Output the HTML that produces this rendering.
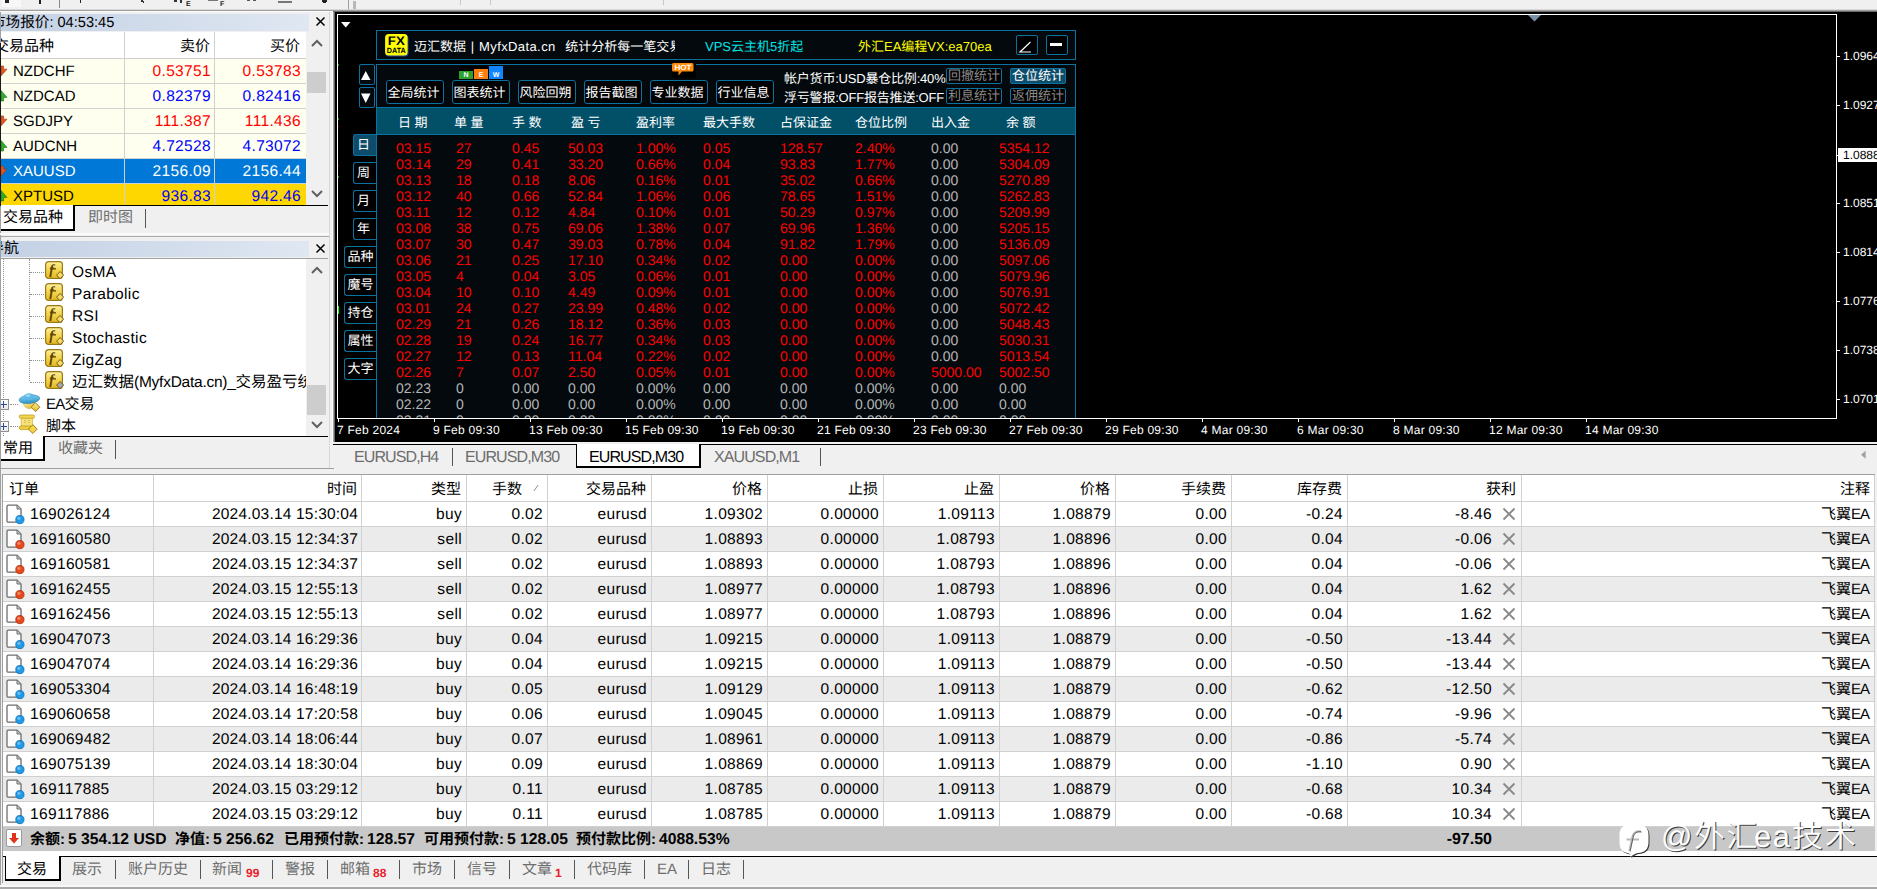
<!DOCTYPE html>
<html lang="zh-CN"><head><meta charset="utf-8"><title>MT4</title>
<style>
html,body{margin:0;padding:0}
body{width:1877px;height:889px;overflow:hidden;background:#f0f0f0;position:relative;font-family:"Liberation Sans","Noto Sans CJK SC",sans-serif;font-size:15px;color:#000;text-rendering:geometricPrecision}
.n{font-size:15.5px;letter-spacing:.35px}
div,span{box-sizing:border-box}
.a{position:absolute;white-space:nowrap}
.r{text-align:right}
.c{text-align:center}
</style></head><body>

<div class="a" style="left:0;top:0;width:1877px;height:10px;background:#f0f0f0"></div>
<div class="a" style="left:0;top:9px;width:1877px;height:1px;background:#d8d8d8"></div>
<div class="a" style="left:0;top:10px;width:1877px;height:1px;background:#a0a0a0"></div>
<div class="a" style="left:0;top:11px;width:333px;height:1px;background:#fafafa"></div>
<div class="a" style="left:333px;top:11px;width:1544px;height:1px;background:#696969"></div>
<div class="a" style="left:2px;top:0;width:19px;height:7px;background:#f8f8f8"></div>
<div class="a" style="left:5px;top:0px;width:4px;height:3px;background:#222"></div>
<div class="a" style="left:39px;top:0px;width:2px;height:4px;background:#222"></div>
<div class="a" style="left:59px;top:0px;width:1px;height:8px;background:#8a8a8a"></div>
<div class="a" style="left:80px;top:0px;width:1px;height:3px;background:#222"></div>
<div class="a" style="left:141px;top:0px;width:2px;height:2px;background:#333"></div>
<div class="a" style="left:143px;top:1px;width:1px;height:2px;background:#333"></div>
<div class="a" style="left:174px;top:0px;width:3px;height:2px;background:#333"></div>
<div class="a" style="left:180px;top:0px;width:2px;height:3px;background:#333"></div>
<div class="a" style="left:208px;top:0px;width:10px;height:1px;background:#777"></div>
<div class="a" style="left:247px;top:0px;width:3px;height:1px;background:#555"></div>
<div class="a" style="left:253px;top:0px;width:3px;height:1px;background:#555"></div>
<div class="a" style="left:278px;top:1px;width:14px;height:2px;background:#777"></div>
<div class="a" style="left:322px;top:0px;width:5px;height:2px;background:#222"></div>
<div class="a" style="left:323px;top:2px;width:3px;height:1px;background:#222"></div>
<div class="a" style="left:348px;top:0px;width:1px;height:9px;background:#a0a0a0"></div>
<div class="a" style="left:353px;top:1px;width:3px;height:8px;background:#b8b8b8"></div>
<div class="a" style="left:460px;top:0px;width:1px;height:5px;background:#c8c8c8"></div>
<div class="a" style="left:490px;top:0px;width:1px;height:5px;background:#c8c8c8"></div>
<div class="a" style="left:663px;top:0px;width:1px;height:5px;background:#c8c8c8"></div>
<div class="a" style="left:186px;top:1px;font-size:7px;line-height:8px;font-weight:bold;color:#222">E</div>
<div class="a" style="left:220px;top:1px;font-size:7px;line-height:8px;font-weight:bold;color:#222">F</div>
<div class="a" style="left:0;top:12px;width:330px;height:224px;background:#f0f0f0"></div>
<div class="a" style="left:0;top:14px;width:309px;height:17px;background:linear-gradient(90deg,#c3d1e4,#dfe7f2)"></div>
<div class="a" style="left:-9px;top:13px;font-size:14.6px;line-height:20px">市场报价: 04:53:45</div>
<svg class="a" style="left:315px;top:16px" width="11" height="11" viewBox="0 0 11 11"><path d="M1.5 1.5 L9.5 9.5 M9.5 1.5 L1.5 9.5" stroke="#000" stroke-width="1.5" fill="none"/></svg>
<div class="a" style="left:0;top:32px;width:306px;height:173px;background:#fff"></div>
<div class="a" style="left:306px;top:32px;width:22px;height:173px;background:#f0f0f0"></div>
<div class="a" style="left:-6px;top:37px;font-size:15px;line-height:20px">交易品种</div>
<div class="a r" style="left:126px;top:37px;width:84px;font-size:15px;line-height:20px">卖价</div>
<div class="a r" style="left:216px;top:37px;width:84px;font-size:15px;line-height:20px">买价</div>
<div class="a" style="left:0;top:59px;width:306px;height:24px;background:#fffff0;overflow:hidden"><span class="a" style="left:13px;top:3px;line-height:20px;color:#000">NZDCHF</span><span class="a r n" style="left:126px;top:3px;width:85px;line-height:20px;color:#f00">0.53751</span><span class="a r n" style="left:216px;top:3px;width:85px;line-height:20px;color:#f00">0.53783</span></div>
<div class="a" style="left:0;top:83px;width:306px;height:1px;background:#d0d0d0"></div>
<svg class="a" style="left:1px;top:65px" width="7" height="12" viewBox="0 0 7 12"><path d="M0 1 H2.6 V4.2 H6 L0.4 10.6 H0Z" fill="#e8561c" stroke="#9a3a10" stroke-width="0.6"/></svg>
<div class="a" style="left:0;top:84px;width:306px;height:24px;background:#fffff0;overflow:hidden"><span class="a" style="left:13px;top:3px;line-height:20px;color:#000">NZDCAD</span><span class="a r n" style="left:126px;top:3px;width:85px;line-height:20px;color:#00f">0.82379</span><span class="a r n" style="left:216px;top:3px;width:85px;line-height:20px;color:#00f">0.82416</span></div>
<div class="a" style="left:0;top:108px;width:306px;height:1px;background:#d0d0d0"></div>
<svg class="a" style="left:1px;top:90px" width="7" height="12" viewBox="0 0 7 12"><path d="M0 11 H2.6 V7.4 H6 L0.4 0.8 H0Z" fill="#2cb02c" stroke="#167016" stroke-width="0.6"/></svg>
<div class="a" style="left:0;top:109px;width:306px;height:24px;background:#fffff0;overflow:hidden"><span class="a" style="left:13px;top:3px;line-height:20px;color:#000">SGDJPY</span><span class="a r n" style="left:126px;top:3px;width:85px;line-height:20px;color:#f00">111.387</span><span class="a r n" style="left:216px;top:3px;width:85px;line-height:20px;color:#f00">111.436</span></div>
<div class="a" style="left:0;top:133px;width:306px;height:1px;background:#d0d0d0"></div>
<svg class="a" style="left:1px;top:115px" width="7" height="12" viewBox="0 0 7 12"><path d="M0 1 H2.6 V4.2 H6 L0.4 10.6 H0Z" fill="#e8561c" stroke="#9a3a10" stroke-width="0.6"/></svg>
<div class="a" style="left:0;top:134px;width:306px;height:24px;background:#fffff0;overflow:hidden"><span class="a" style="left:13px;top:3px;line-height:20px;color:#000">AUDCNH</span><span class="a r n" style="left:126px;top:3px;width:85px;line-height:20px;color:#00f">4.72528</span><span class="a r n" style="left:216px;top:3px;width:85px;line-height:20px;color:#00f">4.73072</span></div>
<div class="a" style="left:0;top:158px;width:306px;height:1px;background:#d0d0d0"></div>
<svg class="a" style="left:1px;top:140px" width="7" height="12" viewBox="0 0 7 12"><path d="M0 11 H2.6 V7.4 H6 L0.4 0.8 H0Z" fill="#2cb02c" stroke="#167016" stroke-width="0.6"/></svg>
<div class="a" style="left:0;top:159px;width:306px;height:24px;background:#0078d7;overflow:hidden"><span class="a" style="left:13px;top:3px;line-height:20px;color:#fff">XAUUSD</span><span class="a r n" style="left:126px;top:3px;width:85px;line-height:20px;color:#fff">2156.09</span><span class="a r n" style="left:216px;top:3px;width:85px;line-height:20px;color:#fff">2156.44</span></div>
<div class="a" style="left:0;top:183px;width:306px;height:1px;background:#d0d0d0"></div>
<svg class="a" style="left:1px;top:165px" width="7" height="12" viewBox="0 0 7 12"><path d="M0 1 H2.6 V4.2 H6 L0.4 10.6 H0Z" fill="#e8561c" stroke="#9a3a10" stroke-width="0.6"/></svg>
<div class="a" style="left:0;top:184px;width:306px;height:21px;background:#ffd700;overflow:hidden"><span class="a" style="left:13px;top:3px;line-height:20px;color:#000">XPTUSD</span><span class="a r n" style="left:126px;top:3px;width:85px;line-height:20px;color:#00f">936.83</span><span class="a r n" style="left:216px;top:3px;width:85px;line-height:20px;color:#00f">942.46</span></div>
<svg class="a" style="left:1px;top:190px" width="7" height="12" viewBox="0 0 7 12"><path d="M0 11 H2.6 V7.4 H6 L0.4 0.8 H0Z" fill="#2cb02c" stroke="#167016" stroke-width="0.6"/></svg>
<div class="a" style="left:124px;top:32px;width:1px;height:173px;background:#d0d0d0"></div>
<div class="a" style="left:214px;top:32px;width:1px;height:173px;background:#d0d0d0"></div>
<div class="a" style="left:0;top:58px;width:306px;height:1px;background:#d0d0d0"></div>
<div class="a" style="left:307px;top:72px;width:19px;height:21px;background:#cdcdcd"></div>
<svg class="a" style="left:310px;top:38px" width="14" height="10" viewBox="0 0 14 10"><path d="M2 8 L7 3 L12 8" fill="none" stroke="#606060" stroke-width="2"/></svg>
<svg class="a" style="left:310px;top:189px" width="14" height="10" viewBox="0 0 14 10"><path d="M2 2 L7 7 L12 2" fill="none" stroke="#606060" stroke-width="2"/></svg>
<div class="a" style="left:0;top:205px;width:328px;height:1px;background:#000"></div>
<div class="a" style="left:0;top:205px;width:75px;height:26px;background:#fff;border-right:2px solid #000;border-bottom:2px solid #000"></div>
<div class="a" style="left:3px;top:208px;font-size:15px;line-height:20px">交易品种</div>
<div class="a" style="left:88px;top:208px;font-size:15px;line-height:20px;color:#6d6d6d">即时图</div>
<div class="a" style="left:145px;top:209px;width:1px;height:19px;background:#555"></div>
<div class="a" style="left:0;top:12px;width:1px;height:224px;background:#a0a0a0"></div>
<div class="a" style="left:0;top:43px;width:1px;height:163px;background:#1a1a1a"></div>
<div class="a" style="left:0;top:236px;width:330px;height:232px;background:#f0f0f0"></div>
<div class="a" style="left:0;top:241px;width:309px;height:16px;background:linear-gradient(90deg,#c3d1e4,#dfe7f2)"></div>
<div class="a" style="left:-11px;top:239px;font-size:15px;line-height:20px">导航</div>
<svg class="a" style="left:315px;top:243px" width="11" height="11" viewBox="0 0 11 11"><path d="M1.5 1.5 L9.5 9.5 M9.5 1.5 L1.5 9.5" stroke="#000" stroke-width="1.5" fill="none"/></svg>
<div class="a" style="left:0;top:259px;width:306px;height:177px;background:#fff"></div>
<div class="a" style="left:0;top:258px;width:328px;height:1px;background:#a0a0a0"></div>
<div class="a" style="left:0;top:233px;width:329px;height:2px;background:#fafafa"></div>
<div class="a" style="left:0;top:236px;width:333px;height:1px;background:#a8a8a8"></div>
<div class="a n" style="left:72px;top:263px;line-height:20px;width:234px;overflow:hidden">OsMA</div>
<svg class="a" style="left:45px;top:261px" width="20" height="20" viewBox="0 0 20 20"><defs><linearGradient id="fg0" x1="0" y1="0" x2="0" y2="1"><stop offset="0" stop-color="#fdf0a0"/><stop offset="0.5" stop-color="#f3d44e"/><stop offset="1" stop-color="#e6b820"/></linearGradient></defs><rect x="0.6" y="0.6" width="16.8" height="16.8" rx="3" fill="url(#fg0)" stroke="#9a7a14" stroke-width="1.2"/><text x="4.2" y="13.2" font-family="Liberation Serif,serif" font-style="italic" font-weight="bold" font-size="14" fill="#5c4300">f</text><rect x="5" y="7.2" width="6" height="1.3" fill="#5c4300"/><rect x="12.6" y="11.6" width="5" height="5" transform="rotate(45 15.1 14.1)" fill="#f7dc6a" stroke="#6a5210" stroke-width="0.9"/></svg>
<div class="a" style="left:30px;top:272px;width:14px;height:0;border-top:1px dotted #909090"></div>
<div class="a n" style="left:72px;top:285px;line-height:20px;width:234px;overflow:hidden">Parabolic</div>
<svg class="a" style="left:45px;top:283px" width="20" height="20" viewBox="0 0 20 20"><defs><linearGradient id="fg1" x1="0" y1="0" x2="0" y2="1"><stop offset="0" stop-color="#fdf0a0"/><stop offset="0.5" stop-color="#f3d44e"/><stop offset="1" stop-color="#e6b820"/></linearGradient></defs><rect x="0.6" y="0.6" width="16.8" height="16.8" rx="3" fill="url(#fg1)" stroke="#9a7a14" stroke-width="1.2"/><text x="4.2" y="13.2" font-family="Liberation Serif,serif" font-style="italic" font-weight="bold" font-size="14" fill="#5c4300">f</text><rect x="5" y="7.2" width="6" height="1.3" fill="#5c4300"/><rect x="12.6" y="11.6" width="5" height="5" transform="rotate(45 15.1 14.1)" fill="#f7dc6a" stroke="#6a5210" stroke-width="0.9"/></svg>
<div class="a" style="left:30px;top:294px;width:14px;height:0;border-top:1px dotted #909090"></div>
<div class="a n" style="left:72px;top:307px;line-height:20px;width:234px;overflow:hidden">RSI</div>
<svg class="a" style="left:45px;top:305px" width="20" height="20" viewBox="0 0 20 20"><defs><linearGradient id="fg2" x1="0" y1="0" x2="0" y2="1"><stop offset="0" stop-color="#fdf0a0"/><stop offset="0.5" stop-color="#f3d44e"/><stop offset="1" stop-color="#e6b820"/></linearGradient></defs><rect x="0.6" y="0.6" width="16.8" height="16.8" rx="3" fill="url(#fg2)" stroke="#9a7a14" stroke-width="1.2"/><text x="4.2" y="13.2" font-family="Liberation Serif,serif" font-style="italic" font-weight="bold" font-size="14" fill="#5c4300">f</text><rect x="5" y="7.2" width="6" height="1.3" fill="#5c4300"/><rect x="12.6" y="11.6" width="5" height="5" transform="rotate(45 15.1 14.1)" fill="#f7dc6a" stroke="#6a5210" stroke-width="0.9"/></svg>
<div class="a" style="left:30px;top:316px;width:14px;height:0;border-top:1px dotted #909090"></div>
<div class="a n" style="left:72px;top:329px;line-height:20px;width:234px;overflow:hidden">Stochastic</div>
<svg class="a" style="left:45px;top:327px" width="20" height="20" viewBox="0 0 20 20"><defs><linearGradient id="fg3" x1="0" y1="0" x2="0" y2="1"><stop offset="0" stop-color="#fdf0a0"/><stop offset="0.5" stop-color="#f3d44e"/><stop offset="1" stop-color="#e6b820"/></linearGradient></defs><rect x="0.6" y="0.6" width="16.8" height="16.8" rx="3" fill="url(#fg3)" stroke="#9a7a14" stroke-width="1.2"/><text x="4.2" y="13.2" font-family="Liberation Serif,serif" font-style="italic" font-weight="bold" font-size="14" fill="#5c4300">f</text><rect x="5" y="7.2" width="6" height="1.3" fill="#5c4300"/><rect x="12.6" y="11.6" width="5" height="5" transform="rotate(45 15.1 14.1)" fill="#f7dc6a" stroke="#6a5210" stroke-width="0.9"/></svg>
<div class="a" style="left:30px;top:338px;width:14px;height:0;border-top:1px dotted #909090"></div>
<div class="a n" style="left:72px;top:351px;line-height:20px;width:234px;overflow:hidden">ZigZag</div>
<svg class="a" style="left:45px;top:349px" width="20" height="20" viewBox="0 0 20 20"><defs><linearGradient id="fg4" x1="0" y1="0" x2="0" y2="1"><stop offset="0" stop-color="#fdf0a0"/><stop offset="0.5" stop-color="#f3d44e"/><stop offset="1" stop-color="#e6b820"/></linearGradient></defs><rect x="0.6" y="0.6" width="16.8" height="16.8" rx="3" fill="url(#fg4)" stroke="#9a7a14" stroke-width="1.2"/><text x="4.2" y="13.2" font-family="Liberation Serif,serif" font-style="italic" font-weight="bold" font-size="14" fill="#5c4300">f</text><rect x="5" y="7.2" width="6" height="1.3" fill="#5c4300"/><rect x="12.6" y="11.6" width="5" height="5" transform="rotate(45 15.1 14.1)" fill="#f7dc6a" stroke="#6a5210" stroke-width="0.9"/></svg>
<div class="a" style="left:30px;top:360px;width:14px;height:0;border-top:1px dotted #909090"></div>
<div class="a n" style="left:72px;top:373px;line-height:20px;width:234px;overflow:hidden"><span style="letter-spacing:0">迈汇数据</span><span style="letter-spacing:-0.25px">(MyfxData.cn)_</span><span style="letter-spacing:0">交易盈亏统计</span></div>
<svg class="a" style="left:45px;top:371px" width="20" height="20" viewBox="0 0 20 20"><defs><linearGradient id="fg5" x1="0" y1="0" x2="0" y2="1"><stop offset="0" stop-color="#fdf0a0"/><stop offset="0.5" stop-color="#f3d44e"/><stop offset="1" stop-color="#e6b820"/></linearGradient></defs><rect x="0.6" y="0.6" width="16.8" height="16.8" rx="3" fill="url(#fg5)" stroke="#9a7a14" stroke-width="1.2"/><text x="4.2" y="13.2" font-family="Liberation Serif,serif" font-style="italic" font-weight="bold" font-size="14" fill="#5c4300">f</text><rect x="5" y="7.2" width="6" height="1.3" fill="#5c4300"/><rect x="12.6" y="11.6" width="5" height="5" transform="rotate(45 15.1 14.1)" fill="#a8a8a8" stroke="#6a5210" stroke-width="0.9"/></svg>
<div class="a" style="left:30px;top:382px;width:14px;height:0;border-top:1px dotted #909090"></div>
<div class="a" style="left:29px;top:259px;width:0;height:122px;border-left:1px dotted #909090"></div>
<div class="a" style="left:3px;top:259px;width:0;height:177px;border-left:1px dotted #909090"></div>
<div class="a" style="left:46px;top:395px;line-height:20px"><span style="letter-spacing:-0.8px">EA</span>交易</div>
<div class="a" style="left:-1px;top:399px;width:10px;height:11px;border:1px solid #909090;background:linear-gradient(#fff,#e8e8e8)"></div>
<div class="a" style="left:1px;top:404px;width:6px;height:1px;background:#2a4a9a"></div>
<div class="a" style="left:3px;top:401px;width:1px;height:7px;background:#2a4a9a"></div>
<div class="a" style="left:10px;top:404px;width:8px;height:0;border-top:1px dotted #909090"></div>
<div class="a" style="left:46px;top:417px;line-height:20px">脚本</div>
<div class="a" style="left:-1px;top:421px;width:10px;height:11px;border:1px solid #909090;background:linear-gradient(#fff,#e8e8e8)"></div>
<div class="a" style="left:1px;top:426px;width:6px;height:1px;background:#2a4a9a"></div>
<div class="a" style="left:3px;top:423px;width:1px;height:7px;background:#2a4a9a"></div>
<div class="a" style="left:10px;top:426px;width:8px;height:0;border-top:1px dotted #909090"></div>
<svg class="a" style="left:18px;top:392px" width="24" height="22" viewBox="0 0 24 22"><defs><linearGradient id="hb" x1="0" y1="0" x2="0" y2="1"><stop offset="0" stop-color="#7fd0f2"/><stop offset="1" stop-color="#2f93c8"/></linearGradient><linearGradient id="yd" x1="0" y1="0" x2="1" y2="1"><stop offset="0" stop-color="#fdf0a0"/><stop offset="1" stop-color="#e0b020"/></linearGradient></defs><path d="M5.5 10.5 H16.8 C16.8 14 14.5 16.5 11.2 16.5 C8 16.5 5.5 14 5.5 10.5Z" fill="url(#yd)" stroke="#c09a20" stroke-width="0.5"/><ellipse cx="11.4" cy="7.2" rx="10.4" ry="4.2" transform="rotate(-6 11.4 7.2)" fill="url(#hb)" stroke="#2a7fb0" stroke-width="0.6"/><ellipse cx="11.2" cy="4.6" rx="5.2" ry="3.4" fill="#5db8e6"/><ellipse cx="10" cy="3.6" rx="2.6" ry="1.4" fill="#a8e0f8" opacity="0.8"/><rect x="14.4" y="12.1" width="6.2" height="6.2" transform="rotate(45 17.5 15.2)" fill="url(#yd)" stroke="#9a7a14" stroke-width="0.9"/></svg>
<svg class="a" style="left:18px;top:414px" width="24" height="22" viewBox="0 0 24 22"><path d="M3.2 2.2 H14.6 V13 H3.2Z" fill="#f6e27a" stroke="#c8a428" stroke-width="0.6"/><rect x="1.2" y="1" width="15.4" height="3.2" rx="1.6" fill="#f3d650" stroke="#b8941a" stroke-width="0.7"/><rect x="1.2" y="12" width="13" height="3.6" rx="1.8" fill="#f0cc40" stroke="#b8941a" stroke-width="0.7"/><path d="M6 6.5 h2 M10 6.5 h2 M6 8.5 h2 M10 8.5 h2" stroke="#d4b440" stroke-width="0.8"/><rect x="11.7" y="12" width="6.2" height="6.2" transform="rotate(45 14.8 15.1)" fill="#f5d548" stroke="#9a7a14" stroke-width="0.9"/></svg>
<div class="a" style="left:306px;top:259px;width:22px;height:177px;background:#f0f0f0"></div>
<div class="a" style="left:307px;top:385px;width:19px;height:30px;background:#cdcdcd"></div>
<svg class="a" style="left:310px;top:265px" width="14" height="10" viewBox="0 0 14 10"><path d="M2 8 L7 3 L12 8" fill="none" stroke="#606060" stroke-width="2"/></svg>
<svg class="a" style="left:310px;top:420px" width="14" height="10" viewBox="0 0 14 10"><path d="M2 2 L7 7 L12 2" fill="none" stroke="#606060" stroke-width="2"/></svg>
<div class="a" style="left:0;top:436px;width:328px;height:1px;background:#000"></div>
<div class="a" style="left:0;top:436px;width:45px;height:25px;background:#fff;border-right:2px solid #000;border-bottom:2px solid #000"></div>
<div class="a" style="left:3px;top:439px;font-size:15px;line-height:20px">常用</div>
<div class="a" style="left:58px;top:439px;font-size:15px;line-height:20px;color:#6d6d6d">收藏夹</div>
<div class="a" style="left:115px;top:440px;width:1px;height:19px;background:#555"></div>
<div class="a" style="left:0;top:236px;width:1px;height:232px;background:#a0a0a0"></div>
<div class="a" style="left:329px;top:12px;width:1px;height:456px;background:#d8d8d8"></div><div class="a" style="left:335px;top:12px;width:1542px;height:430px;background:#000"></div>
<div class="a" style="left:330px;top:12px;width:5px;height:456px;background:#f0f0f0"></div>
<div class="a" style="left:333px;top:12px;width:1px;height:456px;background:#a0a0a0"></div>
<div class="a" style="left:334px;top:12px;width:1px;height:432px;background:#696969"></div>
<div class="a" style="left:332px;top:12px;width:1px;height:456px;background:#fafafa"></div>
<div class="a" style="left:337px;top:14px;width:1500px;height:405px;border:1px solid #fff;border-right:1px solid #fff"></div>
<svg class="a" style="left:340px;top:21px" width="12" height="8" viewBox="0 0 12 8"><path d="M1 1 H10.5 L5.75 6.5Z" fill="#fff"/></svg>
<svg class="a" style="left:1528px;top:15px" width="13" height="7" viewBox="0 0 13 7"><path d="M0 0 H13 L6.5 6.5Z" fill="#7c8fa8"/></svg>
<div class="a" style="left:338px;top:64px;width:1px;height:2px;background:#0a0"></div>
<div class="a" style="left:338px;top:118px;width:1px;height:2px;background:#0a0"></div>
<div class="a" style="left:338px;top:126px;width:1px;height:1px;background:#a00"></div>
<div class="a" style="left:338px;top:165px;width:1px;height:1px;background:#a00"></div>
<div class="a" style="left:338px;top:176px;width:1px;height:2px;background:#0a0"></div>
<div class="a" style="left:338px;top:306px;width:1px;height:8px;background:#0f0"></div>
<div class="a" style="left:376px;top:134px;width:700px;height:284px;background:#03090d;border-left:1px solid #0972a0;border-right:1px solid #0972a0"></div>
<div class="a" style="left:376px;top:30px;width:700px;height:30px;background:#03090d;border:1px solid #0972a0"></div>
<svg class="a" style="left:384px;top:33px" width="26" height="25" viewBox="-0.6 -0.5 26 25"><rect x="1" y="1.5" width="23" height="21.5" rx="3.5" fill="#1c3fb0"/><rect x="0.5" y="0.5" width="22.5" height="21.5" rx="3.5" fill="#ffff00"/><text x="11.7" y="11.2" text-anchor="middle" font-family="Liberation Sans,sans-serif" font-weight="bold" font-size="12.5" textLength="17" lengthAdjust="spacingAndGlyphs" fill="#000">FX</text><text x="11.7" y="19.3" text-anchor="middle" font-family="Liberation Sans,sans-serif" font-weight="bold" font-size="7.6" textLength="19" lengthAdjust="spacingAndGlyphs" fill="#000">DATA</text></svg>
<div class="a" style="left:414px;top:38px;font-size:13px;line-height:18px;color:#fff;width:261px;overflow:hidden;word-spacing:1.2px">迈汇数据 | <span style="letter-spacing:0.4px">MyfxData.cn</span>&nbsp; 统计分析每一笔交易</div>
<div class="a" style="left:705px;top:38px;font-size:13px;line-height:18px;color:#00e5e5">VPS云主机5折起</div>
<div class="a" style="left:858px;top:38px;font-size:13px;line-height:18px;color:#ffff00">外汇EA编程VX:ea70ea</div>
<div class="a" style="left:1016px;top:35px;width:22px;height:20px;border:1px solid #0972a0;border-radius:2px;background:#000"></div>
<div class="a" style="left:1046px;top:35px;width:22px;height:20px;border:1px solid #0972a0;border-radius:2px;background:#000"></div>
<svg class="a" style="left:1016px;top:35px" width="22" height="20" viewBox="0 0 22 20"><path d="M14.5 7 L4 17 H15" fill="none" stroke="#fff" stroke-width="1.2"/></svg>
<div class="a" style="left:1050px;top:43px;width:12px;height:3px;background:#fff"></div>
<div class="a" style="left:376px;top:64px;width:700px;height:44px;background:#03090d;border:1px solid #0972a0;border-bottom:none"></div>
<div class="a" style="left:359px;top:64px;width:16px;height:21px;border:1px solid #0972a0;border-radius:2px;background:#03090d"></div>
<svg class="a" style="left:359px;top:64px" width="16" height="21" viewBox="0 0 16 21"><path d="M2 16 H11.5 L6.75 7Z" fill="#fff"/></svg>
<div class="a" style="left:359px;top:87px;width:16px;height:21px;border:1px solid #0972a0;border-radius:2px;background:#03090d"></div>
<svg class="a" style="left:359px;top:87px" width="16" height="21" viewBox="0 0 16 21"><path d="M2 6.5 H11.5 L6.75 16Z" fill="#fff"/></svg>
<div class="a c" style="left:386px;top:80px;width:58px;height:24px;border:1px solid #0972a0;border-radius:3px;background:#000;color:#fff;font-size:13px;line-height:24px;padding-right:3px">全局统计</div>
<div class="a c" style="left:452px;top:80px;width:58px;height:24px;border:1px solid #0972a0;border-radius:3px;background:#000;color:#fff;font-size:13px;line-height:24px;padding-right:3px">图表统计</div>
<div class="a c" style="left:518px;top:80px;width:58px;height:24px;border:1px solid #0972a0;border-radius:3px;background:#000;color:#fff;font-size:13px;line-height:24px;padding-right:3px">风险回朔</div>
<div class="a c" style="left:584px;top:80px;width:58px;height:24px;border:1px solid #0972a0;border-radius:3px;background:#000;color:#fff;font-size:13px;line-height:24px;padding-right:3px">报告截图</div>
<div class="a c" style="left:650px;top:80px;width:58px;height:24px;border:1px solid #0972a0;border-radius:3px;background:#000;color:#fff;font-size:13px;line-height:24px;padding-right:3px">专业数据</div>
<div class="a c" style="left:716px;top:80px;width:58px;height:24px;border:1px solid #0972a0;border-radius:3px;background:#000;color:#fff;font-size:13px;line-height:24px;padding-right:3px">行业信息</div>
<div class="a" style="left:459px;top:66px;width:44px;height:13px;background:#000"></div>
<div class="a c" style="left:459px;top:71px;width:14px;height:8px;background:#2da12d;color:#fff;font-size:7px;line-height:9px;font-weight:bold">N</div>
<div class="a c" style="left:474px;top:69px;width:14px;height:10px;background:#ff7f0e;color:#fff;font-size:7px;line-height:9px;padding-top:2px;font-weight:bold">E</div>
<div class="a c" style="left:489px;top:66px;width:14px;height:13px;background:#0f86ff;color:#fff;font-size:7px;line-height:9px;padding-top:5px;font-weight:bold">W</div>
<div class="a" style="left:672px;top:63px;width:24px;height:15px;background:#000"></div>
<svg class="a" style="left:671px;top:62px" width="24" height="16" viewBox="0 0 24 16"><path d="M2.5 1 H21 a1.5 1.5 0 0 1 1.5 1.5 V8 a1.5 1.5 0 0 1 -1.5 1.5 H11 L7.5 13.5 L7.5 9.5 H2.5 a1.5 1.5 0 0 1 -1.5 -1.5 V2.5 a1.5 1.5 0 0 1 1.5 -1.5Z" fill="#ff8a0a"/><text x="12" y="8" text-anchor="middle" font-family="Liberation Sans,sans-serif" font-weight="bold" font-size="7.5" fill="#fff" textLength="17" lengthAdjust="spacingAndGlyphs">HOT</text></svg>
<div class="a" style="left:784px;top:70px;font-size:13px;line-height:18px;color:#fff;letter-spacing:-0.2px">帐户货币:USD暴仓比例:40%</div>
<div class="a" style="left:784px;top:89px;font-size:13px;line-height:18px;color:#fff;letter-spacing:-0.2px">浮亏警报:OFF报告推送:OFF</div>
<div class="a c" style="left:946px;top:68px;width:56px;height:16px;border:1px solid #0972a0;border-radius:2px;background:#000;color:#8a8a8a;font-size:13px;line-height:14px">回撤统计</div>
<div class="a c" style="left:1010px;top:68px;width:56px;height:16px;border:1px solid #0972a0;border-radius:2px;background:#0d4d6b;color:#fff;font-size:13px;line-height:14px">仓位统计</div>
<div class="a c" style="left:946px;top:88px;width:56px;height:16px;border:1px solid #0972a0;border-radius:2px;background:#000;color:#8a8a8a;font-size:13px;line-height:14px">利息统计</div>
<div class="a c" style="left:1010px;top:88px;width:56px;height:16px;border:1px solid #0972a0;border-radius:2px;background:#000;color:#8a8a8a;font-size:13px;line-height:14px">返佣统计</div>
<div class="a" style="left:376px;top:107px;width:700px;height:28px;background:#024f68;border:1px solid #0972a0"></div>
<div class="a" style="left:398px;top:114px;font-size:13px;line-height:18px;color:#fff">日 期</div>
<div class="a" style="left:454px;top:114px;font-size:13px;line-height:18px;color:#fff">单 量</div>
<div class="a" style="left:512px;top:114px;font-size:13px;line-height:18px;color:#fff">手 数</div>
<div class="a" style="left:571px;top:114px;font-size:13px;line-height:18px;color:#fff">盈 亏</div>
<div class="a" style="left:636px;top:114px;font-size:13px;line-height:18px;color:#fff">盈利率</div>
<div class="a" style="left:703px;top:114px;font-size:13px;line-height:18px;color:#fff">最大手数</div>
<div class="a" style="left:780px;top:114px;font-size:13px;line-height:18px;color:#fff">占保证金</div>
<div class="a" style="left:855px;top:114px;font-size:13px;line-height:18px;color:#fff">仓位比例</div>
<div class="a" style="left:931px;top:114px;font-size:13px;line-height:18px;color:#fff">出入金</div>
<div class="a" style="left:1006px;top:114px;font-size:13px;line-height:18px;color:#fff">余 额</div>
<div class="a c" style="left:353px;top:134px;width:23px;height:22px;border:1px solid #0972a0;border-right:none;border-radius:3px 0 0 3px;background:#0d4d6b;color:#fff;font-size:13px;line-height:20px;padding-right:3px">日</div>
<div class="a c" style="left:353px;top:162px;width:23px;height:22px;border:1px solid #0972a0;border-right:none;border-radius:3px 0 0 3px;background:#000;color:#fff;font-size:13px;line-height:20px;padding-right:3px">周</div>
<div class="a c" style="left:353px;top:190px;width:23px;height:22px;border:1px solid #0972a0;border-right:none;border-radius:3px 0 0 3px;background:#000;color:#fff;font-size:13px;line-height:20px;padding-right:3px">月</div>
<div class="a c" style="left:353px;top:218px;width:23px;height:22px;border:1px solid #0972a0;border-right:none;border-radius:3px 0 0 3px;background:#000;color:#fff;font-size:13px;line-height:20px;padding-right:3px">年</div>
<div class="a c" style="left:344px;top:246px;width:32px;height:22px;border:1px solid #0972a0;border-right:none;border-radius:3px 0 0 3px;background:#000;color:#fff;font-size:13px;line-height:20px">品种</div>
<div class="a c" style="left:344px;top:274px;width:32px;height:22px;border:1px solid #0972a0;border-right:none;border-radius:3px 0 0 3px;background:#000;color:#fff;font-size:13px;line-height:20px">魔号</div>
<div class="a c" style="left:344px;top:302px;width:32px;height:22px;border:1px solid #0972a0;border-right:none;border-radius:3px 0 0 3px;background:#000;color:#fff;font-size:13px;line-height:20px">持仓</div>
<div class="a c" style="left:344px;top:330px;width:32px;height:22px;border:1px solid #0972a0;border-right:none;border-radius:3px 0 0 3px;background:#000;color:#fff;font-size:13px;line-height:20px">属性</div>
<div class="a c" style="left:344px;top:358px;width:32px;height:22px;border:1px solid #0972a0;border-right:none;border-radius:3px 0 0 3px;background:#000;color:#fff;font-size:13px;line-height:20px">大字</div>
<div class="a" style="left:377px;top:134px;width:698px;height:284px;overflow:hidden;font-size:14px;line-height:16px">
<span class="a" style="left:19px;top:6px;color:#ff0000">03.15</span>
<span class="a" style="left:79px;top:6px;color:#ff0000">27</span>
<span class="a" style="left:135px;top:6px;color:#ff0000">0.45</span>
<span class="a" style="left:191px;top:6px;color:#ff0000">50.03</span>
<span class="a" style="left:259px;top:6px;color:#ff0000">1.00%</span>
<span class="a" style="left:326px;top:6px;color:#ff0000">0.05</span>
<span class="a" style="left:403px;top:6px;color:#ff0000">128.57</span>
<span class="a" style="left:478px;top:6px;color:#ff0000">2.40%</span>
<span class="a" style="left:554px;top:6px;color:#b4b4b4">0.00</span>
<span class="a" style="left:622px;top:6px;color:#ff0000">5354.12</span>
<span class="a" style="left:19px;top:22px;color:#ff0000">03.14</span>
<span class="a" style="left:79px;top:22px;color:#ff0000">29</span>
<span class="a" style="left:135px;top:22px;color:#ff0000">0.41</span>
<span class="a" style="left:191px;top:22px;color:#ff0000">33.20</span>
<span class="a" style="left:259px;top:22px;color:#ff0000">0.66%</span>
<span class="a" style="left:326px;top:22px;color:#ff0000">0.04</span>
<span class="a" style="left:403px;top:22px;color:#ff0000">93.83</span>
<span class="a" style="left:478px;top:22px;color:#ff0000">1.77%</span>
<span class="a" style="left:554px;top:22px;color:#b4b4b4">0.00</span>
<span class="a" style="left:622px;top:22px;color:#ff0000">5304.09</span>
<span class="a" style="left:19px;top:38px;color:#ff0000">03.13</span>
<span class="a" style="left:79px;top:38px;color:#ff0000">18</span>
<span class="a" style="left:135px;top:38px;color:#ff0000">0.18</span>
<span class="a" style="left:191px;top:38px;color:#ff0000">8.06</span>
<span class="a" style="left:259px;top:38px;color:#ff0000">0.16%</span>
<span class="a" style="left:326px;top:38px;color:#ff0000">0.01</span>
<span class="a" style="left:403px;top:38px;color:#ff0000">35.02</span>
<span class="a" style="left:478px;top:38px;color:#ff0000">0.66%</span>
<span class="a" style="left:554px;top:38px;color:#b4b4b4">0.00</span>
<span class="a" style="left:622px;top:38px;color:#ff0000">5270.89</span>
<span class="a" style="left:19px;top:54px;color:#ff0000">03.12</span>
<span class="a" style="left:79px;top:54px;color:#ff0000">40</span>
<span class="a" style="left:135px;top:54px;color:#ff0000">0.66</span>
<span class="a" style="left:191px;top:54px;color:#ff0000">52.84</span>
<span class="a" style="left:259px;top:54px;color:#ff0000">1.06%</span>
<span class="a" style="left:326px;top:54px;color:#ff0000">0.06</span>
<span class="a" style="left:403px;top:54px;color:#ff0000">78.65</span>
<span class="a" style="left:478px;top:54px;color:#ff0000">1.51%</span>
<span class="a" style="left:554px;top:54px;color:#b4b4b4">0.00</span>
<span class="a" style="left:622px;top:54px;color:#ff0000">5262.83</span>
<span class="a" style="left:19px;top:70px;color:#ff0000">03.11</span>
<span class="a" style="left:79px;top:70px;color:#ff0000">12</span>
<span class="a" style="left:135px;top:70px;color:#ff0000">0.12</span>
<span class="a" style="left:191px;top:70px;color:#ff0000">4.84</span>
<span class="a" style="left:259px;top:70px;color:#ff0000">0.10%</span>
<span class="a" style="left:326px;top:70px;color:#ff0000">0.01</span>
<span class="a" style="left:403px;top:70px;color:#ff0000">50.29</span>
<span class="a" style="left:478px;top:70px;color:#ff0000">0.97%</span>
<span class="a" style="left:554px;top:70px;color:#b4b4b4">0.00</span>
<span class="a" style="left:622px;top:70px;color:#ff0000">5209.99</span>
<span class="a" style="left:19px;top:86px;color:#ff0000">03.08</span>
<span class="a" style="left:79px;top:86px;color:#ff0000">38</span>
<span class="a" style="left:135px;top:86px;color:#ff0000">0.75</span>
<span class="a" style="left:191px;top:86px;color:#ff0000">69.06</span>
<span class="a" style="left:259px;top:86px;color:#ff0000">1.38%</span>
<span class="a" style="left:326px;top:86px;color:#ff0000">0.07</span>
<span class="a" style="left:403px;top:86px;color:#ff0000">69.96</span>
<span class="a" style="left:478px;top:86px;color:#ff0000">1.36%</span>
<span class="a" style="left:554px;top:86px;color:#b4b4b4">0.00</span>
<span class="a" style="left:622px;top:86px;color:#ff0000">5205.15</span>
<span class="a" style="left:19px;top:102px;color:#ff0000">03.07</span>
<span class="a" style="left:79px;top:102px;color:#ff0000">30</span>
<span class="a" style="left:135px;top:102px;color:#ff0000">0.47</span>
<span class="a" style="left:191px;top:102px;color:#ff0000">39.03</span>
<span class="a" style="left:259px;top:102px;color:#ff0000">0.78%</span>
<span class="a" style="left:326px;top:102px;color:#ff0000">0.04</span>
<span class="a" style="left:403px;top:102px;color:#ff0000">91.82</span>
<span class="a" style="left:478px;top:102px;color:#ff0000">1.79%</span>
<span class="a" style="left:554px;top:102px;color:#b4b4b4">0.00</span>
<span class="a" style="left:622px;top:102px;color:#ff0000">5136.09</span>
<span class="a" style="left:19px;top:118px;color:#ff0000">03.06</span>
<span class="a" style="left:79px;top:118px;color:#ff0000">21</span>
<span class="a" style="left:135px;top:118px;color:#ff0000">0.25</span>
<span class="a" style="left:191px;top:118px;color:#ff0000">17.10</span>
<span class="a" style="left:259px;top:118px;color:#ff0000">0.34%</span>
<span class="a" style="left:326px;top:118px;color:#ff0000">0.02</span>
<span class="a" style="left:403px;top:118px;color:#ff0000">0.00</span>
<span class="a" style="left:478px;top:118px;color:#ff0000">0.00%</span>
<span class="a" style="left:554px;top:118px;color:#b4b4b4">0.00</span>
<span class="a" style="left:622px;top:118px;color:#ff0000">5097.06</span>
<span class="a" style="left:19px;top:134px;color:#ff0000">03.05</span>
<span class="a" style="left:79px;top:134px;color:#ff0000">4</span>
<span class="a" style="left:135px;top:134px;color:#ff0000">0.04</span>
<span class="a" style="left:191px;top:134px;color:#ff0000">3.05</span>
<span class="a" style="left:259px;top:134px;color:#ff0000">0.06%</span>
<span class="a" style="left:326px;top:134px;color:#ff0000">0.01</span>
<span class="a" style="left:403px;top:134px;color:#ff0000">0.00</span>
<span class="a" style="left:478px;top:134px;color:#ff0000">0.00%</span>
<span class="a" style="left:554px;top:134px;color:#b4b4b4">0.00</span>
<span class="a" style="left:622px;top:134px;color:#ff0000">5079.96</span>
<span class="a" style="left:19px;top:150px;color:#ff0000">03.04</span>
<span class="a" style="left:79px;top:150px;color:#ff0000">10</span>
<span class="a" style="left:135px;top:150px;color:#ff0000">0.10</span>
<span class="a" style="left:191px;top:150px;color:#ff0000">4.49</span>
<span class="a" style="left:259px;top:150px;color:#ff0000">0.09%</span>
<span class="a" style="left:326px;top:150px;color:#ff0000">0.01</span>
<span class="a" style="left:403px;top:150px;color:#ff0000">0.00</span>
<span class="a" style="left:478px;top:150px;color:#ff0000">0.00%</span>
<span class="a" style="left:554px;top:150px;color:#b4b4b4">0.00</span>
<span class="a" style="left:622px;top:150px;color:#ff0000">5076.91</span>
<span class="a" style="left:19px;top:166px;color:#ff0000">03.01</span>
<span class="a" style="left:79px;top:166px;color:#ff0000">24</span>
<span class="a" style="left:135px;top:166px;color:#ff0000">0.27</span>
<span class="a" style="left:191px;top:166px;color:#ff0000">23.99</span>
<span class="a" style="left:259px;top:166px;color:#ff0000">0.48%</span>
<span class="a" style="left:326px;top:166px;color:#ff0000">0.02</span>
<span class="a" style="left:403px;top:166px;color:#ff0000">0.00</span>
<span class="a" style="left:478px;top:166px;color:#ff0000">0.00%</span>
<span class="a" style="left:554px;top:166px;color:#b4b4b4">0.00</span>
<span class="a" style="left:622px;top:166px;color:#ff0000">5072.42</span>
<span class="a" style="left:19px;top:182px;color:#ff0000">02.29</span>
<span class="a" style="left:79px;top:182px;color:#ff0000">21</span>
<span class="a" style="left:135px;top:182px;color:#ff0000">0.26</span>
<span class="a" style="left:191px;top:182px;color:#ff0000">18.12</span>
<span class="a" style="left:259px;top:182px;color:#ff0000">0.36%</span>
<span class="a" style="left:326px;top:182px;color:#ff0000">0.03</span>
<span class="a" style="left:403px;top:182px;color:#ff0000">0.00</span>
<span class="a" style="left:478px;top:182px;color:#ff0000">0.00%</span>
<span class="a" style="left:554px;top:182px;color:#b4b4b4">0.00</span>
<span class="a" style="left:622px;top:182px;color:#ff0000">5048.43</span>
<span class="a" style="left:19px;top:198px;color:#ff0000">02.28</span>
<span class="a" style="left:79px;top:198px;color:#ff0000">19</span>
<span class="a" style="left:135px;top:198px;color:#ff0000">0.24</span>
<span class="a" style="left:191px;top:198px;color:#ff0000">16.77</span>
<span class="a" style="left:259px;top:198px;color:#ff0000">0.34%</span>
<span class="a" style="left:326px;top:198px;color:#ff0000">0.03</span>
<span class="a" style="left:403px;top:198px;color:#ff0000">0.00</span>
<span class="a" style="left:478px;top:198px;color:#ff0000">0.00%</span>
<span class="a" style="left:554px;top:198px;color:#b4b4b4">0.00</span>
<span class="a" style="left:622px;top:198px;color:#ff0000">5030.31</span>
<span class="a" style="left:19px;top:214px;color:#ff0000">02.27</span>
<span class="a" style="left:79px;top:214px;color:#ff0000">12</span>
<span class="a" style="left:135px;top:214px;color:#ff0000">0.13</span>
<span class="a" style="left:191px;top:214px;color:#ff0000">11.04</span>
<span class="a" style="left:259px;top:214px;color:#ff0000">0.22%</span>
<span class="a" style="left:326px;top:214px;color:#ff0000">0.02</span>
<span class="a" style="left:403px;top:214px;color:#ff0000">0.00</span>
<span class="a" style="left:478px;top:214px;color:#ff0000">0.00%</span>
<span class="a" style="left:554px;top:214px;color:#b4b4b4">0.00</span>
<span class="a" style="left:622px;top:214px;color:#ff0000">5013.54</span>
<span class="a" style="left:19px;top:230px;color:#ff0000">02.26</span>
<span class="a" style="left:79px;top:230px;color:#ff0000">7</span>
<span class="a" style="left:135px;top:230px;color:#ff0000">0.07</span>
<span class="a" style="left:191px;top:230px;color:#ff0000">2.50</span>
<span class="a" style="left:259px;top:230px;color:#ff0000">0.05%</span>
<span class="a" style="left:326px;top:230px;color:#ff0000">0.01</span>
<span class="a" style="left:403px;top:230px;color:#ff0000">0.00</span>
<span class="a" style="left:478px;top:230px;color:#ff0000">0.00%</span>
<span class="a" style="left:554px;top:230px;color:#ff0000">5000.00</span>
<span class="a" style="left:622px;top:230px;color:#ff0000">5002.50</span>
<span class="a" style="left:19px;top:246px;color:#b4b4b4">02.23</span>
<span class="a" style="left:79px;top:246px;color:#b4b4b4">0</span>
<span class="a" style="left:135px;top:246px;color:#b4b4b4">0.00</span>
<span class="a" style="left:191px;top:246px;color:#b4b4b4">0.00</span>
<span class="a" style="left:259px;top:246px;color:#b4b4b4">0.00%</span>
<span class="a" style="left:326px;top:246px;color:#b4b4b4">0.00</span>
<span class="a" style="left:403px;top:246px;color:#b4b4b4">0.00</span>
<span class="a" style="left:478px;top:246px;color:#b4b4b4">0.00%</span>
<span class="a" style="left:554px;top:246px;color:#b4b4b4">0.00</span>
<span class="a" style="left:622px;top:246px;color:#b4b4b4">0.00</span>
<span class="a" style="left:19px;top:262px;color:#b4b4b4">02.22</span>
<span class="a" style="left:79px;top:262px;color:#b4b4b4">0</span>
<span class="a" style="left:135px;top:262px;color:#b4b4b4">0.00</span>
<span class="a" style="left:191px;top:262px;color:#b4b4b4">0.00</span>
<span class="a" style="left:259px;top:262px;color:#b4b4b4">0.00%</span>
<span class="a" style="left:326px;top:262px;color:#b4b4b4">0.00</span>
<span class="a" style="left:403px;top:262px;color:#b4b4b4">0.00</span>
<span class="a" style="left:478px;top:262px;color:#b4b4b4">0.00%</span>
<span class="a" style="left:554px;top:262px;color:#b4b4b4">0.00</span>
<span class="a" style="left:622px;top:262px;color:#b4b4b4">0.00</span>
<span class="a" style="left:19px;top:278px;color:#b4b4b4">02.21</span>
<span class="a" style="left:79px;top:278px;color:#b4b4b4">0</span>
<span class="a" style="left:135px;top:278px;color:#b4b4b4">0.00</span>
<span class="a" style="left:191px;top:278px;color:#b4b4b4">0.00</span>
<span class="a" style="left:259px;top:278px;color:#b4b4b4">0.00%</span>
<span class="a" style="left:326px;top:278px;color:#b4b4b4">0.00</span>
<span class="a" style="left:403px;top:278px;color:#b4b4b4">0.00</span>
<span class="a" style="left:478px;top:278px;color:#b4b4b4">0.00%</span>
<span class="a" style="left:554px;top:278px;color:#b4b4b4">0.00</span>
<span class="a" style="left:622px;top:278px;color:#b4b4b4">0.00</span>
</div>
<div class="a" style="left:338px;top:418px;width:1px;height:4px;background:#fff"></div>
<div class="a" style="left:337px;top:422px;font-size:12px;line-height:16px;letter-spacing:0.25px;color:#fff">7 Feb 2024</div>
<div class="a" style="left:434px;top:418px;width:1px;height:4px;background:#fff"></div>
<div class="a" style="left:433px;top:422px;font-size:12px;line-height:16px;letter-spacing:0.25px;color:#fff">9 Feb 09:30</div>
<div class="a" style="left:530px;top:418px;width:1px;height:4px;background:#fff"></div>
<div class="a" style="left:529px;top:422px;font-size:12px;line-height:16px;letter-spacing:0.25px;color:#fff">13 Feb 09:30</div>
<div class="a" style="left:626px;top:418px;width:1px;height:4px;background:#fff"></div>
<div class="a" style="left:625px;top:422px;font-size:12px;line-height:16px;letter-spacing:0.25px;color:#fff">15 Feb 09:30</div>
<div class="a" style="left:722px;top:418px;width:1px;height:4px;background:#fff"></div>
<div class="a" style="left:721px;top:422px;font-size:12px;line-height:16px;letter-spacing:0.25px;color:#fff">19 Feb 09:30</div>
<div class="a" style="left:818px;top:418px;width:1px;height:4px;background:#fff"></div>
<div class="a" style="left:817px;top:422px;font-size:12px;line-height:16px;letter-spacing:0.25px;color:#fff">21 Feb 09:30</div>
<div class="a" style="left:914px;top:418px;width:1px;height:4px;background:#fff"></div>
<div class="a" style="left:913px;top:422px;font-size:12px;line-height:16px;letter-spacing:0.25px;color:#fff">23 Feb 09:30</div>
<div class="a" style="left:1010px;top:418px;width:1px;height:4px;background:#fff"></div>
<div class="a" style="left:1009px;top:422px;font-size:12px;line-height:16px;letter-spacing:0.25px;color:#fff">27 Feb 09:30</div>
<div class="a" style="left:1106px;top:418px;width:1px;height:4px;background:#fff"></div>
<div class="a" style="left:1105px;top:422px;font-size:12px;line-height:16px;letter-spacing:0.25px;color:#fff">29 Feb 09:30</div>
<div class="a" style="left:1202px;top:418px;width:1px;height:4px;background:#fff"></div>
<div class="a" style="left:1201px;top:422px;font-size:12px;line-height:16px;letter-spacing:0.25px;color:#fff">4 Mar 09:30</div>
<div class="a" style="left:1298px;top:418px;width:1px;height:4px;background:#fff"></div>
<div class="a" style="left:1297px;top:422px;font-size:12px;line-height:16px;letter-spacing:0.25px;color:#fff">6 Mar 09:30</div>
<div class="a" style="left:1394px;top:418px;width:1px;height:4px;background:#fff"></div>
<div class="a" style="left:1393px;top:422px;font-size:12px;line-height:16px;letter-spacing:0.25px;color:#fff">8 Mar 09:30</div>
<div class="a" style="left:1490px;top:418px;width:1px;height:4px;background:#fff"></div>
<div class="a" style="left:1489px;top:422px;font-size:12px;line-height:16px;letter-spacing:0.25px;color:#fff">12 Mar 09:30</div>
<div class="a" style="left:1586px;top:418px;width:1px;height:4px;background:#fff"></div>
<div class="a" style="left:1585px;top:422px;font-size:12px;line-height:16px;letter-spacing:0.25px;color:#fff">14 Mar 09:30</div>
<div class="a" style="left:1837px;top:56px;width:3px;height:1px;background:#fff"></div>
<div class="a" style="left:1843px;top:48px;font-size:12px;line-height:16px;color:#fff">1.0964</div>
<div class="a" style="left:1837px;top:105px;width:3px;height:1px;background:#fff"></div>
<div class="a" style="left:1843px;top:97px;font-size:12px;line-height:16px;color:#fff">1.0927</div>
<div class="a" style="left:1837px;top:155px;width:3px;height:1px;background:#fff"></div>
<div class="a" style="left:1838px;top:148px;width:39px;height:14px;background:#fff"></div>
<div class="a" style="left:1843px;top:147px;font-size:12px;line-height:16px;color:#000">1.0888</div>
<div class="a" style="left:1837px;top:203px;width:3px;height:1px;background:#fff"></div>
<div class="a" style="left:1843px;top:195px;font-size:12px;line-height:16px;color:#fff">1.0851</div>
<div class="a" style="left:1837px;top:252px;width:3px;height:1px;background:#fff"></div>
<div class="a" style="left:1843px;top:244px;font-size:12px;line-height:16px;color:#fff">1.0814</div>
<div class="a" style="left:1837px;top:301px;width:3px;height:1px;background:#fff"></div>
<div class="a" style="left:1843px;top:293px;font-size:12px;line-height:16px;color:#fff">1.0776</div>
<div class="a" style="left:1837px;top:350px;width:3px;height:1px;background:#fff"></div>
<div class="a" style="left:1843px;top:342px;font-size:12px;line-height:16px;color:#fff">1.0738</div>
<div class="a" style="left:1837px;top:399px;width:3px;height:1px;background:#fff"></div>
<div class="a" style="left:1843px;top:391px;font-size:12px;line-height:16px;color:#fff">1.0701</div>
<div class="a" style="left:330px;top:442px;width:1547px;height:26px;background:#f0f0f0"></div>
<div class="a" style="left:333px;top:444px;width:1544px;height:1px;background:#000"></div>
<div class="a" style="left:576px;top:444px;width:125px;height:24px;background:#fff;border-left:1px solid #000;border-right:2px solid #000;border-bottom:2px solid #000"></div>
<div class="a" style="left:354px;top:448px;font-size:16px;line-height:20px;letter-spacing:-0.9px;color:#6d6d6d">EURUSD,H4</div>
<div class="a" style="left:465px;top:448px;font-size:16px;line-height:20px;letter-spacing:-0.9px;color:#6d6d6d">EURUSD,M30</div>
<div class="a" style="left:589px;top:448px;font-size:16px;line-height:20px;letter-spacing:-0.9px;color:#000">EURUSD,M30</div>
<div class="a" style="left:714px;top:448px;font-size:16px;line-height:20px;letter-spacing:-0.9px;color:#6d6d6d">XAUUSD,M1</div>
<div class="a" style="left:452px;top:448px;width:1px;height:18px;background:#555"></div>
<div class="a" style="left:820px;top:448px;width:1px;height:18px;background:#555"></div>
<svg class="a" style="left:1860px;top:450px" width="7" height="10" viewBox="0 0 7 10"><path d="M5.6 0.8 L1 4.8 L5.6 8.8Z" fill="#a0a0a0"/></svg>
<div class="a" style="left:0;top:468px;width:334px;height:1px;background:#a0a0a0"></div><div class="a" style="left:0;top:469px;width:1877px;height:420px;background:#f0f0f0"></div>
<div class="a" style="left:0;top:462px;width:1px;height:427px;background:#a0a0a0"></div>
<div class="a" style="left:2px;top:474px;width:1873px;height:353px;background:#fff;border-top:1px solid #a0a0a0;border-left:1px solid #a0a0a0"></div>
<div class="a" style="left:9px;top:480px;font-size:15px;line-height:20px">订单</div>
<div class="a r" style="left:237px;width:120px;top:480px;font-size:15px;line-height:20px">时间</div>
<div class="a r" style="left:341px;width:120px;top:480px;font-size:15px;line-height:20px">类型</div>
<div class="a r" style="left:402px;width:120px;top:480px;font-size:15px;line-height:20px">手数</div>
<div class="a r" style="left:526px;width:120px;top:480px;font-size:15px;line-height:20px">交易品种</div>
<div class="a r" style="left:642px;width:120px;top:480px;font-size:15px;line-height:20px">价格</div>
<div class="a r" style="left:758px;width:120px;top:480px;font-size:15px;line-height:20px">止损</div>
<div class="a r" style="left:874px;width:120px;top:480px;font-size:15px;line-height:20px">止盈</div>
<div class="a r" style="left:990px;width:120px;top:480px;font-size:15px;line-height:20px">价格</div>
<div class="a r" style="left:1106px;width:120px;top:480px;font-size:15px;line-height:20px">手续费</div>
<div class="a r" style="left:1222px;width:120px;top:480px;font-size:15px;line-height:20px">库存费</div>
<div class="a r" style="left:1396px;width:120px;top:480px;font-size:15px;line-height:20px">获利</div>
<div class="a r" style="left:1750px;width:120px;top:480px;font-size:15px;line-height:20px">注释</div>
<svg class="a" style="left:533px;top:484px" width="6" height="8" viewBox="0 0 6 8"><path d="M1 7 L5 1" stroke="#909090" stroke-width="1"/></svg>
<div class="a" style="left:3px;top:502px;width:1871px;height:24px;background:#fff"></div>
<div class="a" style="left:3px;top:526px;width:1871px;height:1px;background:#d0d0d0"></div>
<span class="a n" style="left:30px;top:505px;line-height:20px">169026124</span>
<span class="a r n" style="left:158px;width:200px;top:505px;line-height:20px;letter-spacing:0.2px">2024.03.14 15:30:04</span>
<span class="a r n" style="left:262px;width:200px;top:505px;line-height:20px;">buy</span>
<span class="a r n" style="left:343px;width:200px;top:505px;line-height:20px;">0.02</span>
<span class="a r n" style="left:447px;width:200px;top:505px;line-height:20px;">eurusd</span>
<span class="a r n" style="left:563px;width:200px;top:505px;line-height:20px;">1.09302</span>
<span class="a r n" style="left:679px;width:200px;top:505px;line-height:20px;">0.00000</span>
<span class="a r n" style="left:795px;width:200px;top:505px;line-height:20px;">1.09113</span>
<span class="a r n" style="left:911px;width:200px;top:505px;line-height:20px;">1.08879</span>
<span class="a r n" style="left:1027px;width:200px;top:505px;line-height:20px;">0.00</span>
<span class="a r n" style="left:1143px;width:200px;top:505px;line-height:20px;">-0.24</span>
<span class="a r n" style="left:1292px;width:200px;top:505px;line-height:20px;">-8.46</span>
<span class="a r n" style="left:1669px;width:200px;top:505px;line-height:20px;letter-spacing:0;font-size:15px">飞翼<span style="letter-spacing:-1px">EA</span></span>
<svg class="a" style="left:1502px;top:507px" width="14" height="14" viewBox="0 0 14 14"><path d="M1.5 1.5 L12.5 12.5 M12.5 1.5 L1.5 12.5" stroke="#888" stroke-width="1.8" fill="none"/></svg>
<svg class="a" style="left:5px;top:504px" width="21" height="22" viewBox="0 0 21 22"><path d="M2.6 3 a1.2 1.2 0 0 1 1.2 -1.2 H12.6 L16.4 5.6 V17.6 a1.2 1.2 0 0 1 -1.2 1.2 H3.8 a1.2 1.2 0 0 1 -1.2 -1.2Z" fill="#d8d8d8" opacity="0.6"/><path d="M2 2.4 a1.2 1.2 0 0 1 1.2 -1.2 H12 L16 5 V17 a1.2 1.2 0 0 1 -1.2 1.2 H3.2 a1.2 1.2 0 0 1 -1.2 -1.2Z" fill="#fdfdfd" stroke="#6e6e6e" stroke-width="1.3"/><path d="M12 1.4 V5 H15.8" fill="#c8c8c8" stroke="#6e6e6e" stroke-width="1"/><circle cx="14.9" cy="15.6" r="4.1" fill="#1e9be8" stroke="#1673b5" stroke-width="0.9"/><circle cx="13.9" cy="14.3" r="1.6" fill="#fff" opacity="0.35"/></svg>
<div class="a" style="left:3px;top:527px;width:1871px;height:24px;background:#ebebeb"></div>
<div class="a" style="left:3px;top:551px;width:1871px;height:1px;background:#d0d0d0"></div>
<span class="a n" style="left:30px;top:530px;line-height:20px">169160580</span>
<span class="a r n" style="left:158px;width:200px;top:530px;line-height:20px;letter-spacing:0.2px">2024.03.15 12:34:37</span>
<span class="a r n" style="left:262px;width:200px;top:530px;line-height:20px;">sell</span>
<span class="a r n" style="left:343px;width:200px;top:530px;line-height:20px;">0.02</span>
<span class="a r n" style="left:447px;width:200px;top:530px;line-height:20px;">eurusd</span>
<span class="a r n" style="left:563px;width:200px;top:530px;line-height:20px;">1.08893</span>
<span class="a r n" style="left:679px;width:200px;top:530px;line-height:20px;">0.00000</span>
<span class="a r n" style="left:795px;width:200px;top:530px;line-height:20px;">1.08793</span>
<span class="a r n" style="left:911px;width:200px;top:530px;line-height:20px;">1.08896</span>
<span class="a r n" style="left:1027px;width:200px;top:530px;line-height:20px;">0.00</span>
<span class="a r n" style="left:1143px;width:200px;top:530px;line-height:20px;">0.04</span>
<span class="a r n" style="left:1292px;width:200px;top:530px;line-height:20px;">-0.06</span>
<span class="a r n" style="left:1669px;width:200px;top:530px;line-height:20px;letter-spacing:0;font-size:15px">飞翼<span style="letter-spacing:-1px">EA</span></span>
<svg class="a" style="left:1502px;top:532px" width="14" height="14" viewBox="0 0 14 14"><path d="M1.5 1.5 L12.5 12.5 M12.5 1.5 L1.5 12.5" stroke="#888" stroke-width="1.8" fill="none"/></svg>
<svg class="a" style="left:5px;top:529px" width="21" height="22" viewBox="0 0 21 22"><path d="M2.6 3 a1.2 1.2 0 0 1 1.2 -1.2 H12.6 L16.4 5.6 V17.6 a1.2 1.2 0 0 1 -1.2 1.2 H3.8 a1.2 1.2 0 0 1 -1.2 -1.2Z" fill="#d8d8d8" opacity="0.6"/><path d="M2 2.4 a1.2 1.2 0 0 1 1.2 -1.2 H12 L16 5 V17 a1.2 1.2 0 0 1 -1.2 1.2 H3.2 a1.2 1.2 0 0 1 -1.2 -1.2Z" fill="#fdfdfd" stroke="#6e6e6e" stroke-width="1.3"/><path d="M12 1.4 V5 H15.8" fill="#c8c8c8" stroke="#6e6e6e" stroke-width="1"/><circle cx="14.9" cy="15.6" r="4.1" fill="#e8481c" stroke="#b03510" stroke-width="0.9"/><circle cx="13.9" cy="14.3" r="1.6" fill="#fff" opacity="0.35"/></svg>
<div class="a" style="left:3px;top:552px;width:1871px;height:24px;background:#fff"></div>
<div class="a" style="left:3px;top:576px;width:1871px;height:1px;background:#d0d0d0"></div>
<span class="a n" style="left:30px;top:555px;line-height:20px">169160581</span>
<span class="a r n" style="left:158px;width:200px;top:555px;line-height:20px;letter-spacing:0.2px">2024.03.15 12:34:37</span>
<span class="a r n" style="left:262px;width:200px;top:555px;line-height:20px;">sell</span>
<span class="a r n" style="left:343px;width:200px;top:555px;line-height:20px;">0.02</span>
<span class="a r n" style="left:447px;width:200px;top:555px;line-height:20px;">eurusd</span>
<span class="a r n" style="left:563px;width:200px;top:555px;line-height:20px;">1.08893</span>
<span class="a r n" style="left:679px;width:200px;top:555px;line-height:20px;">0.00000</span>
<span class="a r n" style="left:795px;width:200px;top:555px;line-height:20px;">1.08793</span>
<span class="a r n" style="left:911px;width:200px;top:555px;line-height:20px;">1.08896</span>
<span class="a r n" style="left:1027px;width:200px;top:555px;line-height:20px;">0.00</span>
<span class="a r n" style="left:1143px;width:200px;top:555px;line-height:20px;">0.04</span>
<span class="a r n" style="left:1292px;width:200px;top:555px;line-height:20px;">-0.06</span>
<span class="a r n" style="left:1669px;width:200px;top:555px;line-height:20px;letter-spacing:0;font-size:15px">飞翼<span style="letter-spacing:-1px">EA</span></span>
<svg class="a" style="left:1502px;top:557px" width="14" height="14" viewBox="0 0 14 14"><path d="M1.5 1.5 L12.5 12.5 M12.5 1.5 L1.5 12.5" stroke="#888" stroke-width="1.8" fill="none"/></svg>
<svg class="a" style="left:5px;top:554px" width="21" height="22" viewBox="0 0 21 22"><path d="M2.6 3 a1.2 1.2 0 0 1 1.2 -1.2 H12.6 L16.4 5.6 V17.6 a1.2 1.2 0 0 1 -1.2 1.2 H3.8 a1.2 1.2 0 0 1 -1.2 -1.2Z" fill="#d8d8d8" opacity="0.6"/><path d="M2 2.4 a1.2 1.2 0 0 1 1.2 -1.2 H12 L16 5 V17 a1.2 1.2 0 0 1 -1.2 1.2 H3.2 a1.2 1.2 0 0 1 -1.2 -1.2Z" fill="#fdfdfd" stroke="#6e6e6e" stroke-width="1.3"/><path d="M12 1.4 V5 H15.8" fill="#c8c8c8" stroke="#6e6e6e" stroke-width="1"/><circle cx="14.9" cy="15.6" r="4.1" fill="#e8481c" stroke="#b03510" stroke-width="0.9"/><circle cx="13.9" cy="14.3" r="1.6" fill="#fff" opacity="0.35"/></svg>
<div class="a" style="left:3px;top:577px;width:1871px;height:24px;background:#ebebeb"></div>
<div class="a" style="left:3px;top:601px;width:1871px;height:1px;background:#d0d0d0"></div>
<span class="a n" style="left:30px;top:580px;line-height:20px">169162455</span>
<span class="a r n" style="left:158px;width:200px;top:580px;line-height:20px;letter-spacing:0.2px">2024.03.15 12:55:13</span>
<span class="a r n" style="left:262px;width:200px;top:580px;line-height:20px;">sell</span>
<span class="a r n" style="left:343px;width:200px;top:580px;line-height:20px;">0.02</span>
<span class="a r n" style="left:447px;width:200px;top:580px;line-height:20px;">eurusd</span>
<span class="a r n" style="left:563px;width:200px;top:580px;line-height:20px;">1.08977</span>
<span class="a r n" style="left:679px;width:200px;top:580px;line-height:20px;">0.00000</span>
<span class="a r n" style="left:795px;width:200px;top:580px;line-height:20px;">1.08793</span>
<span class="a r n" style="left:911px;width:200px;top:580px;line-height:20px;">1.08896</span>
<span class="a r n" style="left:1027px;width:200px;top:580px;line-height:20px;">0.00</span>
<span class="a r n" style="left:1143px;width:200px;top:580px;line-height:20px;">0.04</span>
<span class="a r n" style="left:1292px;width:200px;top:580px;line-height:20px;">1.62</span>
<span class="a r n" style="left:1669px;width:200px;top:580px;line-height:20px;letter-spacing:0;font-size:15px">飞翼<span style="letter-spacing:-1px">EA</span></span>
<svg class="a" style="left:1502px;top:582px" width="14" height="14" viewBox="0 0 14 14"><path d="M1.5 1.5 L12.5 12.5 M12.5 1.5 L1.5 12.5" stroke="#888" stroke-width="1.8" fill="none"/></svg>
<svg class="a" style="left:5px;top:579px" width="21" height="22" viewBox="0 0 21 22"><path d="M2.6 3 a1.2 1.2 0 0 1 1.2 -1.2 H12.6 L16.4 5.6 V17.6 a1.2 1.2 0 0 1 -1.2 1.2 H3.8 a1.2 1.2 0 0 1 -1.2 -1.2Z" fill="#d8d8d8" opacity="0.6"/><path d="M2 2.4 a1.2 1.2 0 0 1 1.2 -1.2 H12 L16 5 V17 a1.2 1.2 0 0 1 -1.2 1.2 H3.2 a1.2 1.2 0 0 1 -1.2 -1.2Z" fill="#fdfdfd" stroke="#6e6e6e" stroke-width="1.3"/><path d="M12 1.4 V5 H15.8" fill="#c8c8c8" stroke="#6e6e6e" stroke-width="1"/><circle cx="14.9" cy="15.6" r="4.1" fill="#e8481c" stroke="#b03510" stroke-width="0.9"/><circle cx="13.9" cy="14.3" r="1.6" fill="#fff" opacity="0.35"/></svg>
<div class="a" style="left:3px;top:602px;width:1871px;height:24px;background:#fff"></div>
<div class="a" style="left:3px;top:626px;width:1871px;height:1px;background:#d0d0d0"></div>
<span class="a n" style="left:30px;top:605px;line-height:20px">169162456</span>
<span class="a r n" style="left:158px;width:200px;top:605px;line-height:20px;letter-spacing:0.2px">2024.03.15 12:55:13</span>
<span class="a r n" style="left:262px;width:200px;top:605px;line-height:20px;">sell</span>
<span class="a r n" style="left:343px;width:200px;top:605px;line-height:20px;">0.02</span>
<span class="a r n" style="left:447px;width:200px;top:605px;line-height:20px;">eurusd</span>
<span class="a r n" style="left:563px;width:200px;top:605px;line-height:20px;">1.08977</span>
<span class="a r n" style="left:679px;width:200px;top:605px;line-height:20px;">0.00000</span>
<span class="a r n" style="left:795px;width:200px;top:605px;line-height:20px;">1.08793</span>
<span class="a r n" style="left:911px;width:200px;top:605px;line-height:20px;">1.08896</span>
<span class="a r n" style="left:1027px;width:200px;top:605px;line-height:20px;">0.00</span>
<span class="a r n" style="left:1143px;width:200px;top:605px;line-height:20px;">0.04</span>
<span class="a r n" style="left:1292px;width:200px;top:605px;line-height:20px;">1.62</span>
<span class="a r n" style="left:1669px;width:200px;top:605px;line-height:20px;letter-spacing:0;font-size:15px">飞翼<span style="letter-spacing:-1px">EA</span></span>
<svg class="a" style="left:1502px;top:607px" width="14" height="14" viewBox="0 0 14 14"><path d="M1.5 1.5 L12.5 12.5 M12.5 1.5 L1.5 12.5" stroke="#888" stroke-width="1.8" fill="none"/></svg>
<svg class="a" style="left:5px;top:604px" width="21" height="22" viewBox="0 0 21 22"><path d="M2.6 3 a1.2 1.2 0 0 1 1.2 -1.2 H12.6 L16.4 5.6 V17.6 a1.2 1.2 0 0 1 -1.2 1.2 H3.8 a1.2 1.2 0 0 1 -1.2 -1.2Z" fill="#d8d8d8" opacity="0.6"/><path d="M2 2.4 a1.2 1.2 0 0 1 1.2 -1.2 H12 L16 5 V17 a1.2 1.2 0 0 1 -1.2 1.2 H3.2 a1.2 1.2 0 0 1 -1.2 -1.2Z" fill="#fdfdfd" stroke="#6e6e6e" stroke-width="1.3"/><path d="M12 1.4 V5 H15.8" fill="#c8c8c8" stroke="#6e6e6e" stroke-width="1"/><circle cx="14.9" cy="15.6" r="4.1" fill="#e8481c" stroke="#b03510" stroke-width="0.9"/><circle cx="13.9" cy="14.3" r="1.6" fill="#fff" opacity="0.35"/></svg>
<div class="a" style="left:3px;top:627px;width:1871px;height:24px;background:#ebebeb"></div>
<div class="a" style="left:3px;top:651px;width:1871px;height:1px;background:#d0d0d0"></div>
<span class="a n" style="left:30px;top:630px;line-height:20px">169047073</span>
<span class="a r n" style="left:158px;width:200px;top:630px;line-height:20px;letter-spacing:0.2px">2024.03.14 16:29:36</span>
<span class="a r n" style="left:262px;width:200px;top:630px;line-height:20px;">buy</span>
<span class="a r n" style="left:343px;width:200px;top:630px;line-height:20px;">0.04</span>
<span class="a r n" style="left:447px;width:200px;top:630px;line-height:20px;">eurusd</span>
<span class="a r n" style="left:563px;width:200px;top:630px;line-height:20px;">1.09215</span>
<span class="a r n" style="left:679px;width:200px;top:630px;line-height:20px;">0.00000</span>
<span class="a r n" style="left:795px;width:200px;top:630px;line-height:20px;">1.09113</span>
<span class="a r n" style="left:911px;width:200px;top:630px;line-height:20px;">1.08879</span>
<span class="a r n" style="left:1027px;width:200px;top:630px;line-height:20px;">0.00</span>
<span class="a r n" style="left:1143px;width:200px;top:630px;line-height:20px;">-0.50</span>
<span class="a r n" style="left:1292px;width:200px;top:630px;line-height:20px;">-13.44</span>
<span class="a r n" style="left:1669px;width:200px;top:630px;line-height:20px;letter-spacing:0;font-size:15px">飞翼<span style="letter-spacing:-1px">EA</span></span>
<svg class="a" style="left:1502px;top:632px" width="14" height="14" viewBox="0 0 14 14"><path d="M1.5 1.5 L12.5 12.5 M12.5 1.5 L1.5 12.5" stroke="#888" stroke-width="1.8" fill="none"/></svg>
<svg class="a" style="left:5px;top:629px" width="21" height="22" viewBox="0 0 21 22"><path d="M2.6 3 a1.2 1.2 0 0 1 1.2 -1.2 H12.6 L16.4 5.6 V17.6 a1.2 1.2 0 0 1 -1.2 1.2 H3.8 a1.2 1.2 0 0 1 -1.2 -1.2Z" fill="#d8d8d8" opacity="0.6"/><path d="M2 2.4 a1.2 1.2 0 0 1 1.2 -1.2 H12 L16 5 V17 a1.2 1.2 0 0 1 -1.2 1.2 H3.2 a1.2 1.2 0 0 1 -1.2 -1.2Z" fill="#fdfdfd" stroke="#6e6e6e" stroke-width="1.3"/><path d="M12 1.4 V5 H15.8" fill="#c8c8c8" stroke="#6e6e6e" stroke-width="1"/><circle cx="14.9" cy="15.6" r="4.1" fill="#1e9be8" stroke="#1673b5" stroke-width="0.9"/><circle cx="13.9" cy="14.3" r="1.6" fill="#fff" opacity="0.35"/></svg>
<div class="a" style="left:3px;top:652px;width:1871px;height:24px;background:#fff"></div>
<div class="a" style="left:3px;top:676px;width:1871px;height:1px;background:#d0d0d0"></div>
<span class="a n" style="left:30px;top:655px;line-height:20px">169047074</span>
<span class="a r n" style="left:158px;width:200px;top:655px;line-height:20px;letter-spacing:0.2px">2024.03.14 16:29:36</span>
<span class="a r n" style="left:262px;width:200px;top:655px;line-height:20px;">buy</span>
<span class="a r n" style="left:343px;width:200px;top:655px;line-height:20px;">0.04</span>
<span class="a r n" style="left:447px;width:200px;top:655px;line-height:20px;">eurusd</span>
<span class="a r n" style="left:563px;width:200px;top:655px;line-height:20px;">1.09215</span>
<span class="a r n" style="left:679px;width:200px;top:655px;line-height:20px;">0.00000</span>
<span class="a r n" style="left:795px;width:200px;top:655px;line-height:20px;">1.09113</span>
<span class="a r n" style="left:911px;width:200px;top:655px;line-height:20px;">1.08879</span>
<span class="a r n" style="left:1027px;width:200px;top:655px;line-height:20px;">0.00</span>
<span class="a r n" style="left:1143px;width:200px;top:655px;line-height:20px;">-0.50</span>
<span class="a r n" style="left:1292px;width:200px;top:655px;line-height:20px;">-13.44</span>
<span class="a r n" style="left:1669px;width:200px;top:655px;line-height:20px;letter-spacing:0;font-size:15px">飞翼<span style="letter-spacing:-1px">EA</span></span>
<svg class="a" style="left:1502px;top:657px" width="14" height="14" viewBox="0 0 14 14"><path d="M1.5 1.5 L12.5 12.5 M12.5 1.5 L1.5 12.5" stroke="#888" stroke-width="1.8" fill="none"/></svg>
<svg class="a" style="left:5px;top:654px" width="21" height="22" viewBox="0 0 21 22"><path d="M2.6 3 a1.2 1.2 0 0 1 1.2 -1.2 H12.6 L16.4 5.6 V17.6 a1.2 1.2 0 0 1 -1.2 1.2 H3.8 a1.2 1.2 0 0 1 -1.2 -1.2Z" fill="#d8d8d8" opacity="0.6"/><path d="M2 2.4 a1.2 1.2 0 0 1 1.2 -1.2 H12 L16 5 V17 a1.2 1.2 0 0 1 -1.2 1.2 H3.2 a1.2 1.2 0 0 1 -1.2 -1.2Z" fill="#fdfdfd" stroke="#6e6e6e" stroke-width="1.3"/><path d="M12 1.4 V5 H15.8" fill="#c8c8c8" stroke="#6e6e6e" stroke-width="1"/><circle cx="14.9" cy="15.6" r="4.1" fill="#1e9be8" stroke="#1673b5" stroke-width="0.9"/><circle cx="13.9" cy="14.3" r="1.6" fill="#fff" opacity="0.35"/></svg>
<div class="a" style="left:3px;top:677px;width:1871px;height:24px;background:#ebebeb"></div>
<div class="a" style="left:3px;top:701px;width:1871px;height:1px;background:#d0d0d0"></div>
<span class="a n" style="left:30px;top:680px;line-height:20px">169053304</span>
<span class="a r n" style="left:158px;width:200px;top:680px;line-height:20px;letter-spacing:0.2px">2024.03.14 16:48:19</span>
<span class="a r n" style="left:262px;width:200px;top:680px;line-height:20px;">buy</span>
<span class="a r n" style="left:343px;width:200px;top:680px;line-height:20px;">0.05</span>
<span class="a r n" style="left:447px;width:200px;top:680px;line-height:20px;">eurusd</span>
<span class="a r n" style="left:563px;width:200px;top:680px;line-height:20px;">1.09129</span>
<span class="a r n" style="left:679px;width:200px;top:680px;line-height:20px;">0.00000</span>
<span class="a r n" style="left:795px;width:200px;top:680px;line-height:20px;">1.09113</span>
<span class="a r n" style="left:911px;width:200px;top:680px;line-height:20px;">1.08879</span>
<span class="a r n" style="left:1027px;width:200px;top:680px;line-height:20px;">0.00</span>
<span class="a r n" style="left:1143px;width:200px;top:680px;line-height:20px;">-0.62</span>
<span class="a r n" style="left:1292px;width:200px;top:680px;line-height:20px;">-12.50</span>
<span class="a r n" style="left:1669px;width:200px;top:680px;line-height:20px;letter-spacing:0;font-size:15px">飞翼<span style="letter-spacing:-1px">EA</span></span>
<svg class="a" style="left:1502px;top:682px" width="14" height="14" viewBox="0 0 14 14"><path d="M1.5 1.5 L12.5 12.5 M12.5 1.5 L1.5 12.5" stroke="#888" stroke-width="1.8" fill="none"/></svg>
<svg class="a" style="left:5px;top:679px" width="21" height="22" viewBox="0 0 21 22"><path d="M2.6 3 a1.2 1.2 0 0 1 1.2 -1.2 H12.6 L16.4 5.6 V17.6 a1.2 1.2 0 0 1 -1.2 1.2 H3.8 a1.2 1.2 0 0 1 -1.2 -1.2Z" fill="#d8d8d8" opacity="0.6"/><path d="M2 2.4 a1.2 1.2 0 0 1 1.2 -1.2 H12 L16 5 V17 a1.2 1.2 0 0 1 -1.2 1.2 H3.2 a1.2 1.2 0 0 1 -1.2 -1.2Z" fill="#fdfdfd" stroke="#6e6e6e" stroke-width="1.3"/><path d="M12 1.4 V5 H15.8" fill="#c8c8c8" stroke="#6e6e6e" stroke-width="1"/><circle cx="14.9" cy="15.6" r="4.1" fill="#1e9be8" stroke="#1673b5" stroke-width="0.9"/><circle cx="13.9" cy="14.3" r="1.6" fill="#fff" opacity="0.35"/></svg>
<div class="a" style="left:3px;top:702px;width:1871px;height:24px;background:#fff"></div>
<div class="a" style="left:3px;top:726px;width:1871px;height:1px;background:#d0d0d0"></div>
<span class="a n" style="left:30px;top:705px;line-height:20px">169060658</span>
<span class="a r n" style="left:158px;width:200px;top:705px;line-height:20px;letter-spacing:0.2px">2024.03.14 17:20:58</span>
<span class="a r n" style="left:262px;width:200px;top:705px;line-height:20px;">buy</span>
<span class="a r n" style="left:343px;width:200px;top:705px;line-height:20px;">0.06</span>
<span class="a r n" style="left:447px;width:200px;top:705px;line-height:20px;">eurusd</span>
<span class="a r n" style="left:563px;width:200px;top:705px;line-height:20px;">1.09045</span>
<span class="a r n" style="left:679px;width:200px;top:705px;line-height:20px;">0.00000</span>
<span class="a r n" style="left:795px;width:200px;top:705px;line-height:20px;">1.09113</span>
<span class="a r n" style="left:911px;width:200px;top:705px;line-height:20px;">1.08879</span>
<span class="a r n" style="left:1027px;width:200px;top:705px;line-height:20px;">0.00</span>
<span class="a r n" style="left:1143px;width:200px;top:705px;line-height:20px;">-0.74</span>
<span class="a r n" style="left:1292px;width:200px;top:705px;line-height:20px;">-9.96</span>
<span class="a r n" style="left:1669px;width:200px;top:705px;line-height:20px;letter-spacing:0;font-size:15px">飞翼<span style="letter-spacing:-1px">EA</span></span>
<svg class="a" style="left:1502px;top:707px" width="14" height="14" viewBox="0 0 14 14"><path d="M1.5 1.5 L12.5 12.5 M12.5 1.5 L1.5 12.5" stroke="#888" stroke-width="1.8" fill="none"/></svg>
<svg class="a" style="left:5px;top:704px" width="21" height="22" viewBox="0 0 21 22"><path d="M2.6 3 a1.2 1.2 0 0 1 1.2 -1.2 H12.6 L16.4 5.6 V17.6 a1.2 1.2 0 0 1 -1.2 1.2 H3.8 a1.2 1.2 0 0 1 -1.2 -1.2Z" fill="#d8d8d8" opacity="0.6"/><path d="M2 2.4 a1.2 1.2 0 0 1 1.2 -1.2 H12 L16 5 V17 a1.2 1.2 0 0 1 -1.2 1.2 H3.2 a1.2 1.2 0 0 1 -1.2 -1.2Z" fill="#fdfdfd" stroke="#6e6e6e" stroke-width="1.3"/><path d="M12 1.4 V5 H15.8" fill="#c8c8c8" stroke="#6e6e6e" stroke-width="1"/><circle cx="14.9" cy="15.6" r="4.1" fill="#1e9be8" stroke="#1673b5" stroke-width="0.9"/><circle cx="13.9" cy="14.3" r="1.6" fill="#fff" opacity="0.35"/></svg>
<div class="a" style="left:3px;top:727px;width:1871px;height:24px;background:#ebebeb"></div>
<div class="a" style="left:3px;top:751px;width:1871px;height:1px;background:#d0d0d0"></div>
<span class="a n" style="left:30px;top:730px;line-height:20px">169069482</span>
<span class="a r n" style="left:158px;width:200px;top:730px;line-height:20px;letter-spacing:0.2px">2024.03.14 18:06:44</span>
<span class="a r n" style="left:262px;width:200px;top:730px;line-height:20px;">buy</span>
<span class="a r n" style="left:343px;width:200px;top:730px;line-height:20px;">0.07</span>
<span class="a r n" style="left:447px;width:200px;top:730px;line-height:20px;">eurusd</span>
<span class="a r n" style="left:563px;width:200px;top:730px;line-height:20px;">1.08961</span>
<span class="a r n" style="left:679px;width:200px;top:730px;line-height:20px;">0.00000</span>
<span class="a r n" style="left:795px;width:200px;top:730px;line-height:20px;">1.09113</span>
<span class="a r n" style="left:911px;width:200px;top:730px;line-height:20px;">1.08879</span>
<span class="a r n" style="left:1027px;width:200px;top:730px;line-height:20px;">0.00</span>
<span class="a r n" style="left:1143px;width:200px;top:730px;line-height:20px;">-0.86</span>
<span class="a r n" style="left:1292px;width:200px;top:730px;line-height:20px;">-5.74</span>
<span class="a r n" style="left:1669px;width:200px;top:730px;line-height:20px;letter-spacing:0;font-size:15px">飞翼<span style="letter-spacing:-1px">EA</span></span>
<svg class="a" style="left:1502px;top:732px" width="14" height="14" viewBox="0 0 14 14"><path d="M1.5 1.5 L12.5 12.5 M12.5 1.5 L1.5 12.5" stroke="#888" stroke-width="1.8" fill="none"/></svg>
<svg class="a" style="left:5px;top:729px" width="21" height="22" viewBox="0 0 21 22"><path d="M2.6 3 a1.2 1.2 0 0 1 1.2 -1.2 H12.6 L16.4 5.6 V17.6 a1.2 1.2 0 0 1 -1.2 1.2 H3.8 a1.2 1.2 0 0 1 -1.2 -1.2Z" fill="#d8d8d8" opacity="0.6"/><path d="M2 2.4 a1.2 1.2 0 0 1 1.2 -1.2 H12 L16 5 V17 a1.2 1.2 0 0 1 -1.2 1.2 H3.2 a1.2 1.2 0 0 1 -1.2 -1.2Z" fill="#fdfdfd" stroke="#6e6e6e" stroke-width="1.3"/><path d="M12 1.4 V5 H15.8" fill="#c8c8c8" stroke="#6e6e6e" stroke-width="1"/><circle cx="14.9" cy="15.6" r="4.1" fill="#1e9be8" stroke="#1673b5" stroke-width="0.9"/><circle cx="13.9" cy="14.3" r="1.6" fill="#fff" opacity="0.35"/></svg>
<div class="a" style="left:3px;top:752px;width:1871px;height:24px;background:#fff"></div>
<div class="a" style="left:3px;top:776px;width:1871px;height:1px;background:#d0d0d0"></div>
<span class="a n" style="left:30px;top:755px;line-height:20px">169075139</span>
<span class="a r n" style="left:158px;width:200px;top:755px;line-height:20px;letter-spacing:0.2px">2024.03.14 18:30:04</span>
<span class="a r n" style="left:262px;width:200px;top:755px;line-height:20px;">buy</span>
<span class="a r n" style="left:343px;width:200px;top:755px;line-height:20px;">0.09</span>
<span class="a r n" style="left:447px;width:200px;top:755px;line-height:20px;">eurusd</span>
<span class="a r n" style="left:563px;width:200px;top:755px;line-height:20px;">1.08869</span>
<span class="a r n" style="left:679px;width:200px;top:755px;line-height:20px;">0.00000</span>
<span class="a r n" style="left:795px;width:200px;top:755px;line-height:20px;">1.09113</span>
<span class="a r n" style="left:911px;width:200px;top:755px;line-height:20px;">1.08879</span>
<span class="a r n" style="left:1027px;width:200px;top:755px;line-height:20px;">0.00</span>
<span class="a r n" style="left:1143px;width:200px;top:755px;line-height:20px;">-1.10</span>
<span class="a r n" style="left:1292px;width:200px;top:755px;line-height:20px;">0.90</span>
<span class="a r n" style="left:1669px;width:200px;top:755px;line-height:20px;letter-spacing:0;font-size:15px">飞翼<span style="letter-spacing:-1px">EA</span></span>
<svg class="a" style="left:1502px;top:757px" width="14" height="14" viewBox="0 0 14 14"><path d="M1.5 1.5 L12.5 12.5 M12.5 1.5 L1.5 12.5" stroke="#888" stroke-width="1.8" fill="none"/></svg>
<svg class="a" style="left:5px;top:754px" width="21" height="22" viewBox="0 0 21 22"><path d="M2.6 3 a1.2 1.2 0 0 1 1.2 -1.2 H12.6 L16.4 5.6 V17.6 a1.2 1.2 0 0 1 -1.2 1.2 H3.8 a1.2 1.2 0 0 1 -1.2 -1.2Z" fill="#d8d8d8" opacity="0.6"/><path d="M2 2.4 a1.2 1.2 0 0 1 1.2 -1.2 H12 L16 5 V17 a1.2 1.2 0 0 1 -1.2 1.2 H3.2 a1.2 1.2 0 0 1 -1.2 -1.2Z" fill="#fdfdfd" stroke="#6e6e6e" stroke-width="1.3"/><path d="M12 1.4 V5 H15.8" fill="#c8c8c8" stroke="#6e6e6e" stroke-width="1"/><circle cx="14.9" cy="15.6" r="4.1" fill="#1e9be8" stroke="#1673b5" stroke-width="0.9"/><circle cx="13.9" cy="14.3" r="1.6" fill="#fff" opacity="0.35"/></svg>
<div class="a" style="left:3px;top:777px;width:1871px;height:24px;background:#ebebeb"></div>
<div class="a" style="left:3px;top:801px;width:1871px;height:1px;background:#d0d0d0"></div>
<span class="a n" style="left:30px;top:780px;line-height:20px">169117885</span>
<span class="a r n" style="left:158px;width:200px;top:780px;line-height:20px;letter-spacing:0.2px">2024.03.15 03:29:12</span>
<span class="a r n" style="left:262px;width:200px;top:780px;line-height:20px;">buy</span>
<span class="a r n" style="left:343px;width:200px;top:780px;line-height:20px;">0.11</span>
<span class="a r n" style="left:447px;width:200px;top:780px;line-height:20px;">eurusd</span>
<span class="a r n" style="left:563px;width:200px;top:780px;line-height:20px;">1.08785</span>
<span class="a r n" style="left:679px;width:200px;top:780px;line-height:20px;">0.00000</span>
<span class="a r n" style="left:795px;width:200px;top:780px;line-height:20px;">1.09113</span>
<span class="a r n" style="left:911px;width:200px;top:780px;line-height:20px;">1.08879</span>
<span class="a r n" style="left:1027px;width:200px;top:780px;line-height:20px;">0.00</span>
<span class="a r n" style="left:1143px;width:200px;top:780px;line-height:20px;">-0.68</span>
<span class="a r n" style="left:1292px;width:200px;top:780px;line-height:20px;">10.34</span>
<span class="a r n" style="left:1669px;width:200px;top:780px;line-height:20px;letter-spacing:0;font-size:15px">飞翼<span style="letter-spacing:-1px">EA</span></span>
<svg class="a" style="left:1502px;top:782px" width="14" height="14" viewBox="0 0 14 14"><path d="M1.5 1.5 L12.5 12.5 M12.5 1.5 L1.5 12.5" stroke="#888" stroke-width="1.8" fill="none"/></svg>
<svg class="a" style="left:5px;top:779px" width="21" height="22" viewBox="0 0 21 22"><path d="M2.6 3 a1.2 1.2 0 0 1 1.2 -1.2 H12.6 L16.4 5.6 V17.6 a1.2 1.2 0 0 1 -1.2 1.2 H3.8 a1.2 1.2 0 0 1 -1.2 -1.2Z" fill="#d8d8d8" opacity="0.6"/><path d="M2 2.4 a1.2 1.2 0 0 1 1.2 -1.2 H12 L16 5 V17 a1.2 1.2 0 0 1 -1.2 1.2 H3.2 a1.2 1.2 0 0 1 -1.2 -1.2Z" fill="#fdfdfd" stroke="#6e6e6e" stroke-width="1.3"/><path d="M12 1.4 V5 H15.8" fill="#c8c8c8" stroke="#6e6e6e" stroke-width="1"/><circle cx="14.9" cy="15.6" r="4.1" fill="#1e9be8" stroke="#1673b5" stroke-width="0.9"/><circle cx="13.9" cy="14.3" r="1.6" fill="#fff" opacity="0.35"/></svg>
<div class="a" style="left:3px;top:802px;width:1871px;height:24px;background:#fff"></div>
<div class="a" style="left:3px;top:826px;width:1871px;height:1px;background:#d0d0d0"></div>
<span class="a n" style="left:30px;top:805px;line-height:20px">169117886</span>
<span class="a r n" style="left:158px;width:200px;top:805px;line-height:20px;letter-spacing:0.2px">2024.03.15 03:29:12</span>
<span class="a r n" style="left:262px;width:200px;top:805px;line-height:20px;">buy</span>
<span class="a r n" style="left:343px;width:200px;top:805px;line-height:20px;">0.11</span>
<span class="a r n" style="left:447px;width:200px;top:805px;line-height:20px;">eurusd</span>
<span class="a r n" style="left:563px;width:200px;top:805px;line-height:20px;">1.08785</span>
<span class="a r n" style="left:679px;width:200px;top:805px;line-height:20px;">0.00000</span>
<span class="a r n" style="left:795px;width:200px;top:805px;line-height:20px;">1.09113</span>
<span class="a r n" style="left:911px;width:200px;top:805px;line-height:20px;">1.08879</span>
<span class="a r n" style="left:1027px;width:200px;top:805px;line-height:20px;">0.00</span>
<span class="a r n" style="left:1143px;width:200px;top:805px;line-height:20px;">-0.68</span>
<span class="a r n" style="left:1292px;width:200px;top:805px;line-height:20px;">10.34</span>
<span class="a r n" style="left:1669px;width:200px;top:805px;line-height:20px;letter-spacing:0;font-size:15px">飞翼<span style="letter-spacing:-1px">EA</span></span>
<svg class="a" style="left:1502px;top:807px" width="14" height="14" viewBox="0 0 14 14"><path d="M1.5 1.5 L12.5 12.5 M12.5 1.5 L1.5 12.5" stroke="#888" stroke-width="1.8" fill="none"/></svg>
<svg class="a" style="left:5px;top:804px" width="21" height="22" viewBox="0 0 21 22"><path d="M2.6 3 a1.2 1.2 0 0 1 1.2 -1.2 H12.6 L16.4 5.6 V17.6 a1.2 1.2 0 0 1 -1.2 1.2 H3.8 a1.2 1.2 0 0 1 -1.2 -1.2Z" fill="#d8d8d8" opacity="0.6"/><path d="M2 2.4 a1.2 1.2 0 0 1 1.2 -1.2 H12 L16 5 V17 a1.2 1.2 0 0 1 -1.2 1.2 H3.2 a1.2 1.2 0 0 1 -1.2 -1.2Z" fill="#fdfdfd" stroke="#6e6e6e" stroke-width="1.3"/><path d="M12 1.4 V5 H15.8" fill="#c8c8c8" stroke="#6e6e6e" stroke-width="1"/><circle cx="14.9" cy="15.6" r="4.1" fill="#1e9be8" stroke="#1673b5" stroke-width="0.9"/><circle cx="13.9" cy="14.3" r="1.6" fill="#fff" opacity="0.35"/></svg>
<div class="a" style="left:3px;top:501px;width:1871px;height:1px;background:#d0d0d0"></div>
<div class="a" style="left:153px;top:475px;width:1px;height:352px;background:#d0d0d0"></div>
<div class="a" style="left:361px;top:475px;width:1px;height:352px;background:#d0d0d0"></div>
<div class="a" style="left:466px;top:475px;width:1px;height:352px;background:#d0d0d0"></div>
<div class="a" style="left:547px;top:475px;width:1px;height:352px;background:#d0d0d0"></div>
<div class="a" style="left:651px;top:475px;width:1px;height:352px;background:#d0d0d0"></div>
<div class="a" style="left:767px;top:475px;width:1px;height:352px;background:#d0d0d0"></div>
<div class="a" style="left:883px;top:475px;width:1px;height:352px;background:#d0d0d0"></div>
<div class="a" style="left:999px;top:475px;width:1px;height:352px;background:#d0d0d0"></div>
<div class="a" style="left:1115px;top:475px;width:1px;height:352px;background:#d0d0d0"></div>
<div class="a" style="left:1231px;top:475px;width:1px;height:352px;background:#d0d0d0"></div>
<div class="a" style="left:1347px;top:475px;width:1px;height:352px;background:#d0d0d0"></div>
<div class="a" style="left:1521px;top:475px;width:1px;height:352px;background:#d0d0d0"></div>
<div class="a" style="left:1874px;top:475px;width:1px;height:352px;background:#d0d0d0"></div>
<div class="a" style="left:3px;top:827px;width:1872px;height:24px;background:#c8c8c8"></div>
<div class="a" style="left:30px;top:830px;font-size:15px;line-height:20px;font-weight:bold;word-spacing:-1.2px">余额: <span style="font-size:15.7px;letter-spacing:0px;word-spacing:0">5 354.12 USD</span></div>
<div class="a" style="left:175px;top:830px;font-size:15px;line-height:20px;font-weight:bold;word-spacing:-1.2px">净值: <span style="font-size:15.7px;letter-spacing:0px;word-spacing:0">5 256.62</span></div>
<div class="a" style="left:284px;top:830px;font-size:15px;line-height:20px;font-weight:bold;word-spacing:-1.2px">已用预付款: <span style="font-size:15.7px;letter-spacing:0px;word-spacing:0">128.57</span></div>
<div class="a" style="left:424px;top:830px;font-size:15px;line-height:20px;font-weight:bold;word-spacing:-1.2px">可用预付款: <span style="font-size:15.7px;letter-spacing:0px;word-spacing:0">5 128.05</span></div>
<div class="a" style="left:576px;top:830px;font-size:15px;line-height:20px;font-weight:bold;word-spacing:-1.2px">预付款比例: <span style="font-size:15.7px;letter-spacing:0px;word-spacing:0">4088.53%</span></div>
<div class="a r" style="left:1292px;width:200px;top:830px;font-size:15px;line-height:20px;font-weight:bold;word-spacing:-1.2px;font-size:16px">-97.50</div>
<svg class="a" style="left:6px;top:829px" width="17" height="19" viewBox="0 0 17 19"><rect x="0.5" y="0.5" width="15" height="17" rx="1.5" fill="#fff" stroke="#9a9a9a"/><path d="M6 4 H10 V9 H13 L8 14.5 L3 9 H6Z" fill="#e0341a"/></svg>
<div class="a" style="left:3px;top:851px;width:1874px;height:5px;background:#fff"></div>
<div class="a" style="left:3px;top:856px;width:1874px;height:1px;background:#000"></div>
<div class="a" style="left:5px;top:856px;width:56px;height:25px;background:#fff;border-left:1px solid #000;border-right:2px solid #000;border-bottom:2px solid #000"></div>
<div class="a" style="left:17px;top:860px;font-size:15px;line-height:20px;color:#000">交易</div>
<div class="a" style="left:72px;top:860px;font-size:15px;line-height:20px;color:#6d6d6d">展示</div>
<div class="a" style="left:128px;top:860px;font-size:15px;line-height:20px;color:#6d6d6d">账户历史</div>
<div class="a" style="left:212px;top:860px;font-size:15px;line-height:20px;color:#6d6d6d">新闻</div>
<div class="a" style="left:285px;top:860px;font-size:15px;line-height:20px;color:#6d6d6d">警报</div>
<div class="a" style="left:340px;top:860px;font-size:15px;line-height:20px;color:#6d6d6d">邮箱</div>
<div class="a" style="left:412px;top:860px;font-size:15px;line-height:20px;color:#6d6d6d">市场</div>
<div class="a" style="left:467px;top:860px;font-size:15px;line-height:20px;color:#6d6d6d">信号</div>
<div class="a" style="left:522px;top:860px;font-size:15px;line-height:20px;color:#6d6d6d">文章</div>
<div class="a" style="left:587px;top:860px;font-size:15px;line-height:20px;color:#6d6d6d">代码库</div>
<div class="a" style="left:657px;top:860px;font-size:15px;line-height:20px;color:#6d6d6d">EA</div>
<div class="a" style="left:701px;top:860px;font-size:15px;line-height:20px;color:#6d6d6d">日志</div>
<div class="a" style="left:115px;top:860px;width:1px;height:19px;background:#555"></div>
<div class="a" style="left:200px;top:860px;width:1px;height:19px;background:#555"></div>
<div class="a" style="left:272px;top:860px;width:1px;height:19px;background:#555"></div>
<div class="a" style="left:327px;top:860px;width:1px;height:19px;background:#555"></div>
<div class="a" style="left:399px;top:860px;width:1px;height:19px;background:#555"></div>
<div class="a" style="left:454px;top:860px;width:1px;height:19px;background:#555"></div>
<div class="a" style="left:509px;top:860px;width:1px;height:19px;background:#555"></div>
<div class="a" style="left:574px;top:860px;width:1px;height:19px;background:#555"></div>
<div class="a" style="left:644px;top:860px;width:1px;height:19px;background:#555"></div>
<div class="a" style="left:688px;top:860px;width:1px;height:19px;background:#555"></div>
<div class="a" style="left:743px;top:860px;width:1px;height:19px;background:#555"></div>
<div class="a" style="left:246px;top:865px;font-size:12px;line-height:16px;font-weight:bold;color:#e8202a">99</div>
<div class="a" style="left:373px;top:865px;font-size:12px;line-height:16px;font-weight:bold;color:#e8202a">88</div>
<div class="a" style="left:555px;top:865px;font-size:12px;line-height:16px;font-weight:bold;color:#e8202a">1</div>
<div class="a" style="left:0;top:885px;width:1877px;height:2px;background:#f8f8f8"></div>
<div class="a" style="left:0;top:887px;width:1877px;height:2px;background:#a8a8a8"></div>
<div class="a" style="left:2px;top:827px;width:1px;height:56px;background:#a0a0a0"></div>
<svg class="a" style="left:1614px;top:820px" width="40" height="40" viewBox="0 0 40 40"><path d="M5.5 15 C5.5 8 9 4.5 16 4.5 H24 C31 4.5 34.5 8 34.5 15 V22 C34.5 29 31 32.5 24 33 C21 33.4 19 35 16.5 37 C17 35 16 33.6 13.5 33 C8 32 5.5 29 5.5 22Z" fill="#3a3a3a" transform="translate(1,1)"/><path d="M5.5 15 C5.5 8 9 4.5 16 4.5 H24 C31 4.5 34.5 8 34.5 15 V22 C34.5 29 31 32.5 24 33 C21 33.4 19 35 16.5 37 C17 35 16 33.6 13.5 33 C8 32 5.5 29 5.5 22Z" fill="#fff"/><path d="M27 11.5 C22 10.5 19.5 12.5 18.5 17 L15.5 31 M12.5 19.5 H25" fill="none" stroke="#b8b8b8" stroke-width="2.2"/><path d="M27.6 12 C22.6 11 20.1 13 19.1 17.5 L16.1 31.5" fill="none" stroke="#3a3a3a" stroke-width="0.7"/></svg>
<div class="a" style="left:1661px;top:819px;font-family:'Liberation Sans','Noto Sans CJK SC',sans-serif;font-weight:350;font-size:31px;line-height:36px;color:#fff;text-shadow:1px 1px 0 #3a3a3a;letter-spacing:0">@</div>
<div class="a" style="left:1694px;top:819px;font-family:'Liberation Sans','Noto Sans CJK SC',sans-serif;font-weight:350;font-size:31px;line-height:36px;color:#fff;text-shadow:1px 1px 0 #3a3a3a;letter-spacing:1.5px">外汇</div>
<div class="a" style="left:1754px;top:819px;font-family:'Liberation Sans','Noto Sans CJK SC',sans-serif;font-weight:350;font-size:31px;line-height:36px;color:#fff;text-shadow:1px 1px 0 #3a3a3a;letter-spacing:1.5px">ea</div>
<div class="a" style="left:1792px;top:819px;font-family:'Liberation Sans','Noto Sans CJK SC',sans-serif;font-weight:350;font-size:31px;line-height:36px;color:#fff;text-shadow:1px 1px 0 #3a3a3a;letter-spacing:2px">技术</div></body></html>
